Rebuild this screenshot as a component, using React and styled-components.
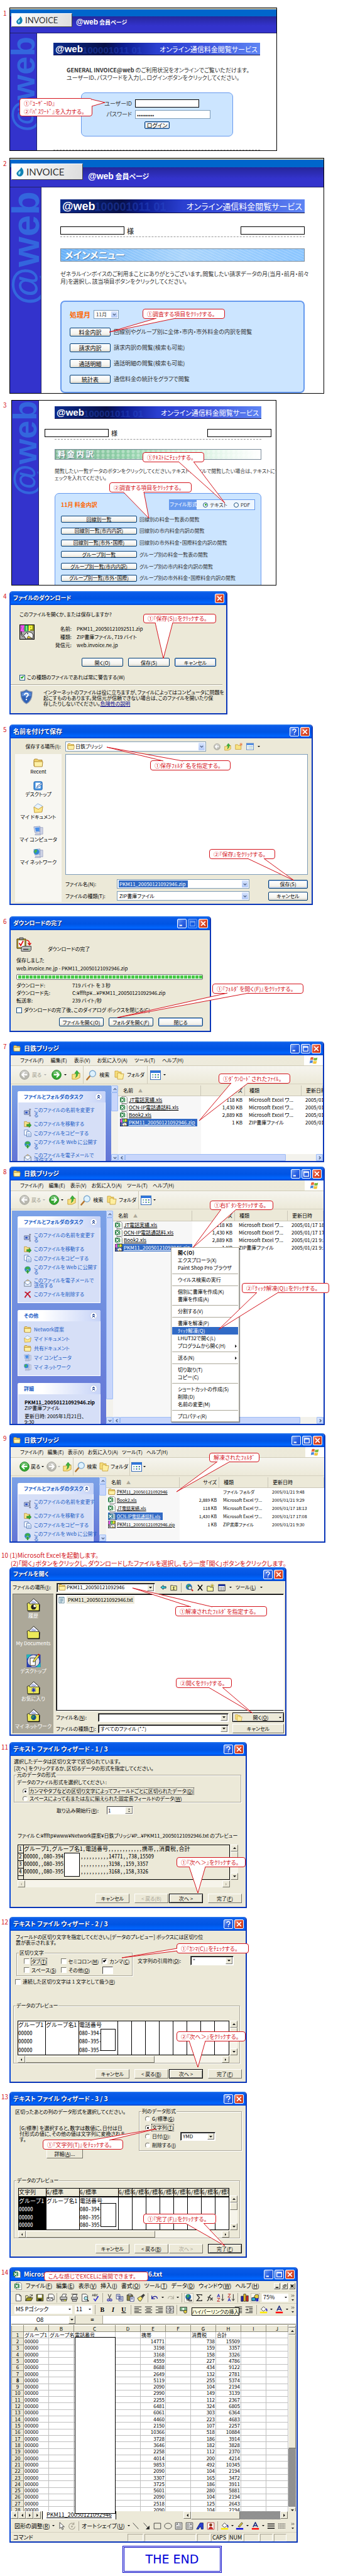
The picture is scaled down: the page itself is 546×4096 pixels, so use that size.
import React, { useId } from "react";
import styled, { createGlobalStyle, css } from "styled-components";

const RED = "#d4141c";
const FACE = "#ece9d8";

const Global = createGlobalStyle`
  *, *::before, *::after { box-sizing: border-box; }
  body {
    margin: 0;
    background: #fff;
    color: #000;
    font: 8px/10px "Noto Sans CJK JP", "Liberation Sans", sans-serif;
    font-feature-settings: "palt";
  }
  button, input, select { font: inherit; font-feature-settings: inherit; color: inherit; margin: 0; }
  p, h1, h2, h3, h4, fieldset { margin: 0; }
  svg { display: block; flex: none; }
`;

/* ---------- page scaffolding ---------- */

const Page = styled.main`
  padding-bottom: 5px;
  overflow: hidden;
`;

const Step = styled.section`
  display: grid;
  grid-template-columns: 15px minmax(0, 1fr);
  margin-top: ${(p) => p.$gap}px;
`;

const StepNo = styled.span`
  color: ${RED};
  font-size: 10px;
  line-height: 10px;
  padding-top: ${(p) => p.$top ?? 3}px;
  padding-left: ${(p) => (p.$wide ? 2 : 5)}px;
  white-space: nowrap;
`;

const Figure = styled.div`
  position: relative;
  width: 100%;
  max-width: ${(p) => p.$w}px;
`;

const Row = styled.div`
  display: flex;
  align-items: ${(p) => p.$align ?? "center"};
  justify-content: ${(p) => p.$justify ?? "flex-start"};
  gap: ${(p) => p.$gap ?? 0}px;
  margin-top: ${(p) => p.$mt ?? 0}px;
  padding-left: ${(p) => p.$pl ?? 0}px;
  padding-right: ${(p) => p.$pr ?? 0}px;
  height: ${(p) => (p.$h ? p.$h + "px" : "auto")};
  white-space: nowrap;
`;

const Spacer = styled.span`
  flex: 1;
`;

/* ---------- red call-outs that lie over the screens ---------- */

const Bubble = styled.div`
  position: absolute;
  left: ${(p) => p.$x}px;
  top: ${(p) => p.$y}px;
  width: ${(p) => p.$w}px;
  height: ${(p) => p.$h}px;
  border: 1px solid ${RED};
  border-radius: 4px;
  background: #fff;
  color: ${RED};
  font-size: 9px;
  line-height: 13px;
  display: flex;
  flex-direction: column;
  justify-content: center;
  padding-left: 6px;
  white-space: nowrap;
`;

const TailLayer = styled.svg`
  position: absolute;
  inset: 0;
  width: 100%;
  height: 100%;
  overflow: visible;
  pointer-events: none;
`;

function Callout({ box: [x, y, w, h], tail, children }) {
  return (
    <>
      <Bubble $x={x} $y={y} $w={w} $h={h}>
        {children}
      </Bubble>
      {tail && (
        <TailLayer aria-hidden="true">
          <polyline points={tail} fill="#fff" stroke={RED} />
        </TailLayer>
      )}
    </>
  );
}

/* ---------- @web member pages ---------- */

const WebFrame = styled.div`
  height: ${(p) => p.$h}px;
  border: 1px solid #000;
  background: #fff;
  overflow: hidden;
  display: flex;
  flex-direction: column;
  margin-left: ${(p) => p.$ml ?? 0}px;
`;

const WebHead = styled.header`
  flex: none;
  height: ${(p) => p.$h}px;
  border-bottom: 1px solid #222266;
  background: linear-gradient(#0066cc 0 ${(p) => p.$band}px, #26269a ${(p) => p.$band}px, #3333cc 70%);
  border-top: 2px solid #c9c7b0;
  display: flex;
  align-items: flex-start;
  gap: ${(p) => p.$gap}px;
  padding: ${(p) => p.$pad}px 0 0 2px;
`;

const Logo = styled.div`
  width: ${(p) => p.$w}px;
  height: ${(p) => p.$h}px;
  border: 1px solid #444;
  border-top-color: #fff;
  border-left-color: #fff;
  background: linear-gradient(100deg, #fff, #ddd);
  display: flex;
  align-items: center;
  gap: 4px;
  padding-left: 7px;
  color: #333;
  font: ${(p) => p.$size}px "Lato", "Noto Sans", sans-serif;
`;

const WebTitle = styled.h2`
  color: #fff;
  font-size: ${(p) => p.$size}px;
  line-height: 16px;
  padding-top: ${(p) => p.$pt}px;
  white-space: nowrap;
  big { font: bold ${(p) => p.$size + 3}px "Liberation Sans", sans-serif; }
`;

const WebBody = styled.div`
  flex: 1;
  min-height: 0;
  display: flex;
`;

const SideBrand = styled.div`
  flex: none;
  width: ${(p) => p.$w}px;
  background: #3333cc;
  border-right: 1px solid #222266;
  overflow: hidden;
  padding-top: ${(p) => p.$pt}px;
  span {
    display: block;
    writing-mode: vertical-rl;
    transform: rotate(180deg);
    color: #3366dd;
    font: bold ${(p) => p.$size}px/${(p) => p.$w}px "Liberation Sans", sans-serif;
  }
`;

const WebMain = styled.div`
  flex: 1;
  min-width: 0;
  padding: ${(p) => p.$pad};
  color: #333;
`;

const BannerBox = styled.div`
  position: relative;
  height: ${(p) => p.$h}px;
  border-bottom: 1px solid #111144;
  background: linear-gradient(95deg, #0b2a8c, #071048 25%, #0c1c90 34%, #2a3fd0 50%, #3a4fdc 70%, #5f86f4);
  display: flex;
  align-items: center;
  justify-content: space-between;
  padding: 0 4px 0 3px;
  color: #fff;
  font-size: ${(p) => p.$size}px;
  white-space: nowrap;
  overflow: hidden;
  b { font: bold ${(p) => p.$brand}px/${(p) => p.$h}px "Liberation Sans", sans-serif; }
`;

const Digits = styled.span`
  position: absolute;
  left: 14%;
  bottom: 0;
  color: #2b4fd0;
  opacity: 0.4;
  font: bold ${(p) => p.$size}px/${(p) => p.$size}px "Liberation Sans", sans-serif;
`;

function Banner({ h, size, brand }) {
  return (
    <BannerBox $h={h} $size={size} $brand={brand}>
      <Digits aria-hidden="true" $size={brand}>100001011 01</Digits>
      <b>@web</b>
      <span>オンライン通信料金閲覧サービス</span>
    </BannerBox>
  );
}

const InvoiceLogo = ({ w, h, size }) => (
  <Logo $w={w} $h={h} $size={size}>
    <svg width={size - 3} height={size} viewBox="0 0 12 16">
      <path d="M8 0C12 4 13 9 10 13C7 17 1 16 0 11C0 7 5 6 8 0Z" fill="#1283b4" />
      <path d="M6 6C3 8 2 10 4 13C6 11 8 9 6 6Z" fill="#9fe3f5" />
    </svg>
    INVOICE
  </Logo>
);

const Blank = styled.div`
  width: ${(p) => p.$w ?? 102}px;
  height: 13px;
  border: 1px solid #000;
  background: #fff;
`;

const NameRow = styled.div`
  display: flex;
  align-items: center;
  justify-content: space-between;
  margin: ${(p) => p.$m};
  strong { display: flex; align-items: center; gap: 4px; font-size: ${(p) => p.$size}px; font-weight: 500; }
`;

const Dashes = styled.hr`
  border: 0;
  border-top: 1px dashed #999;
  margin: ${(p) => p.$mt}px 0 0;
`;

const Intro = styled.p`
  font-size: ${(p) => p.$size ?? 9}px;
  line-height: ${(p) => p.$lh}px;
  margin-top: ${(p) => p.$mt}px;
  padding-left: ${(p) => p.$pl ?? 0}px;
  white-space: nowrap;
  b { font-weight: 700; }
`;

const BluePanel = styled.div`
  border: ${(p) => p.$b ?? 1}px solid #6699ee;
  border-radius: 7px;
  background: #cce5ff;
  height: ${(p) => p.$h}px;
  margin: ${(p) => p.$m};
  padding: ${(p) => p.$p};
  display: flex;
  flex-direction: column;
`;

const Bar = styled.h3`
  height: ${(p) => p.$h}px;
  margin-top: ${(p) => p.$mt}px;
  border: 1px solid #7a8a99;
  background: ${(p) => p.$bg};
  color: #fff;
  font-size: ${(p) => p.$size}px;
  line-height: ${(p) => p.$h - 3}px;
  padding-left: ${(p) => p.$pl}px;
  text-shadow: 1px 1px 1px rgba(40, 80, 120, 0.6);
  white-space: nowrap;
`;

const Orange = styled.strong`
  color: #ff6600;
  font-size: ${(p) => p.$size}px;
`;

/* ---------- buttons and fields ---------- */

const XpButton = styled.button`
  width: ${(p) => p.$w}px;
  height: ${(p) => p.$h ?? 14}px;
  padding: 0;
  flex: none;
  border: 1px solid #003c74;
  border-radius: 2px;
  background: linear-gradient(#fff, #f4f3ee 70%, #dcd7cb);
  ${(p) => p.$focus && css`box-shadow: inset 0 0 0 1px #a9c5f2;`}
  font-size: ${(p) => p.$size ?? 8}px;
  line-height: ${(p) => (p.$h ?? 14) - 3}px;
  white-space: nowrap;
  color: #000;
`;

const OldButton = styled.button`
  width: ${(p) => p.$w ?? 54}px;
  height: ${(p) => p.$h ?? 15}px;
  padding: 0;
  flex: none;
  background: ${FACE};
  border: 1px solid;
  border-color: #fff #77756a #77756a #fff;
  line-height: 11px;
  white-space: nowrap;
  ${(p) => p.$default && css`border-color: #000; box-shadow: inset 1px 1px #fff, inset -1px -1px #888;`}
  &:disabled { color: #a5a294; }
`;

const FieldShell = styled.span`
  display: flex;
  align-items: center;
  width: ${(p) => (p.$w ? p.$w + "px" : "auto")};
  ${(p) => !p.$w && css`flex: 1; min-width: 0;`}
  height: ${(p) => p.$h ?? 15}px;
  background: #fff;
  border: 1px solid #7f9db9;
  ${(p) => p.$old && css`border-color: #555 #fff #fff #555; box-shadow: inset 1px 1px #000;`}
  padding: 1px 1px 1px 2px;
  select, input {
    flex: 1;
    min-width: 0;
    width: 0;
    height: 100%;
    border: 0;
    padding: 0 0 0 1px;
    background: transparent;
    appearance: none;
    outline: none;
  }
`;

const DropMark = styled.span`
  flex: none;
  align-self: stretch;
  width: ${(p) => (p.$old ? 11 : 10)}px;
  display: grid;
  place-items: center;
  ${(p) =>
    p.$old
      ? css`background: ${FACE}; border: 1px solid; border-color: #fff #777 #777 #fff;`
      : css`background: linear-gradient(#d6e3fd, #b3c9f7); border-radius: 1px;`}
`;

const Caret = ({ size = 5, color = "#000", dir = "down" }) => {
  const d = { down: "M0 2h8L4 6z", up: "M0 6h8L4 2z", left: "M6 0v8L2 4z", right: "M2 0v8L6 4z" }[dir];
  return (
    <svg width={size} height={size} viewBox="0 0 8 8">
      <path d={d} fill={color} />
    </svg>
  );
};

const Chevron = ({ dir = "down", color = "#4d6185" }) => {
  const d = { down: "M1 2.5L4 5.5L7 2.5", up: "M1 5.5L4 2.5L7 5.5", left: "M5.5 1L2.5 4L5.5 7", right: "M2.5 1L5.5 4L2.5 7" }[dir];
  return (
    <svg width="6" height="6" viewBox="0 0 8 8">
      <path d={d} fill="none" stroke={color} strokeWidth="1.8" />
    </svg>
  );
};

const Editable = styled.input`
  ${(p) => p.$selected && css`&& { background: linear-gradient(90deg, #316ac5 0 56%, #fff 56%); color: #fff; }`}
`;

function Combo({ label, value, icon, w, h, old, edit, id, selected }) {
  return (
    <FieldShell $w={w} $h={h} $old={old}>
      {icon}
      {edit ? (
        <Editable id={id} aria-label={label} defaultValue={value} $selected={selected} />
      ) : (
        <select id={id} aria-label={label} defaultValue={value}>
          <option>{value}</option>
        </select>
      )}
      <DropMark $old={old}>{old ? <Caret /> : <Chevron />}</DropMark>
    </FieldShell>
  );
}

const Tick = styled.input`
  appearance: none;
  flex: none;
  width: ${(p) => p.$s ?? 9}px;
  height: ${(p) => p.$s ?? 9}px;
  background: #fff;
  border: 1px solid #1c5180;
  border-radius: ${(p) => (p.type === "radio" ? "50%" : "0")};
  ${(p) => p.$old && css`border-color: #77756a #fff #fff #77756a;`}
  display: grid;
  place-items: center;
  &:checked::after {
    content: "";
    ${(p) =>
      p.type === "radio"
        ? css`width: 3px; height: 3px; border-radius: 50%; background: ${p.$old ? "#000" : "#21a121"};`
        : css`
            width: 5px; height: 3px; margin-top: -2px;
            border: solid ${p.$old ? "#000" : "#21a121"};
            border-width: 0 0 2px 2px;
            transform: rotate(-45deg);
          `}
  }
`;

const CheckLabel = styled.label`
  display: flex;
  align-items: center;
  gap: ${(p) => p.$gap ?? 3}px;
  width: ${(p) => (p.$w ? p.$w + "px" : "auto")};
  height: ${(p) => (p.$h ? p.$h + "px" : "auto")};
  white-space: nowrap;
`;

const Dotted = styled.span`
  outline: 1px dotted #333;
`;

/* ---------- windows ---------- */

const Win = styled.div`
  height: ${(p) => p.$h}px;
  border: 2px solid #0848d8;
  border-top: 0;
  border-bottom-color: #0a36b8;
  border-right-color: #0a36b8;
  border-radius: 5px 5px 0 0;
  background: ${FACE};
  display: flex;
  flex-direction: column;
  overflow: hidden;
`;

const TitleBar = styled.div`
  flex: none;
  height: 22px;
  margin: 0 -2px;
  padding: 0 5px 0 6px;
  background: linear-gradient(#2a7bee, #0a5be8 12%, #0054e3 55%, #0066ff 85%, #0040c8);
  display: flex;
  align-items: center;
  gap: 2px;
  color: #fff;
  h3 { flex: 1; font-size: ${(p) => p.$size}px; line-height: 14px; text-shadow: 1px 1px #0a2a80; white-space: nowrap; padding-left: ${(p) => (p.$icon ? 3 : 0)}px; }
`;

const CapButton = styled.button`
  width: 15px;
  height: 15px;
  padding: 0;
  border: 1px solid #fff;
  border-radius: 2px;
  background: ${(p) => (p.$red ? "linear-gradient(135deg,#f0967c,#e0492a 45%,#c23a1a)" : "linear-gradient(135deg,#7ba4f5,#2a62e4 50%,#1d4fd0)")};
  opacity: ${(p) => (p.disabled ? 0.45 : 1)};
  display: grid;
  place-items: center;
`;

const CAPS = {
  min: ["最小化", <path key="p" d="M2 10h5" stroke="#fff" strokeWidth="2.4" />],
  max: ["最大化", <path key="p" d="M2 2.5h9v8.5H2zM2 3.6h9" stroke="#fff" strokeWidth="1.5" fill="none" />],
  help: ["ヘルプ", <path key="p" d="M3.5 4.5C3.5 0.5 9.8 0.8 9.5 4.4C9.3 6.2 6.5 6.5 6.5 8.8M6.5 10.3v1.8" stroke="#fff" strokeWidth="1.8" fill="none" />],
  close: ["閉じる", <path key="p" d="M2.5 2.5L10.5 10.5M10.5 2.5L2.5 10.5" stroke="#fff" strokeWidth="2" />],
};

function Window({ title, icon, caps, h, size = 10, off = [], children }) {
  return (
    <Win $h={h}>
      <TitleBar $icon={!!icon} $size={size}>
        {icon}
        <h3>{title}</h3>
        {caps.map((c) => (
          <CapButton key={c} $red={c === "close"} disabled={off.includes(c)} aria-label={CAPS[c][0]}>
            <svg width="11" height="11" viewBox="0 0 13 13">{CAPS[c][1]}</svg>
          </CapButton>
        ))}
      </TitleBar>
      {children}
    </Win>
  );
}

const Body = styled.div`
  flex: 1;
  min-height: 0;
  padding: ${(p) => p.$p};
`;

/* ---------- icons ---------- */

const FolderIcon = ({ size = 11 }) => (
  <svg width={size} height={size} viewBox="0 0 16 16">
    <path d="M1 3.5L2 2h4.5L8 3.5h6V13H1z" fill="#f3d46c" stroke="#a9822a" />
    <path d="M1 6h14l-.8 8H1.8z" fill="#fdf0a6" stroke="#b58e35" />
  </svg>
);

const OpenFolder = ({ size = 17 }) => (
  <svg width={size} height={size} viewBox="0 0 16 16">
    <path d="M1 2h5l1 1.5h4V12H1z" fill="#f7df7d" stroke="#c59a2e" strokeWidth=".8" />
    <path d="M5 5h4l1 1.5h5L13.5 15H5z" fill="#fdeea0" stroke="#c59a2e" strokeWidth=".8" />
  </svg>
);

const UpFolder = ({ size = 14 }) => (
  <svg width={size} height={size + 2} viewBox="0 0 16 18">
    <path d="M1 8h5l1.5-2H15v8L9 17H1z" fill="#f8e283" stroke="#c59a2e" />
    <path d="M7 14C11 12 11.5 9 11 6.5H13.8L9.5 1L5.5 6.5H8C8.5 9 8.5 12 7 14Z" fill="#3cb53c" stroke="#1c7a1c" strokeWidth=".6" />
  </svg>
);

const NewFolder = ({ size = 12 }) => (
  <svg width={size} height={size} viewBox="0 0 16 16">
    <path d="M1 4h5l1.5 2H13v8H1z" fill="#f8e283" stroke="#c59a2e" />
    <path d="M13 0v7M9.5 3.5h7M10.5 1l5 5M15.5 1l-5 5" stroke="#e8743a" />
  </svg>
);

const Circle = ({ on, left, size = 17 }) => (
  <svg width={size} height={size} viewBox="0 0 18 18">
    <circle cx="9" cy="9" r="8.3" fill={on ? "#34a832" : "#b9b8b0"} stroke={on ? "#1f7d22" : "#a3a299"} />
    <ellipse cx="9" cy="5.5" rx="6" ry="4" fill="#fff" opacity=".3" />
    <path d={left ? "M14 9H5M9 4.5L4.5 9L9 13.5" : "M4 9h9M9 4.5L13.5 9L9 13.5"} stroke="#fff" strokeWidth="2.2" fill="none" />
  </svg>
);

const SearchIcon = () => (
  <svg width="17" height="17" viewBox="0 0 18 18">
    <path d="M1.5 16.5L6.5 10.5" stroke="#b5742c" strokeWidth="2.6" strokeLinecap="round" />
    <circle cx="11" cy="6.5" r="5.2" fill="#dff2fd" stroke="#7aa7cf" strokeWidth="1.4" />
  </svg>
);

const ViewIcon = ({ size = 17 }) => (
  <svg width={size} height={size} viewBox="0 0 18 18">
    <rect x=".5" y="1.5" width="17" height="15" fill="#fff" stroke="#2a63b5" />
    <path d="M1 3.5h16" stroke="#2e76dc" strokeWidth="3.5" />
    <path d="M3.5 8.5h2M3.5 12.5h2" stroke="#7aa" strokeWidth="2" />
    <path d="M8 8.5h2M12.5 12.5h2" stroke="#2f9a48" strokeWidth="2" />
    <path d="M12.5 8.5h2M8 12.5h2" stroke="#3350b0" strokeWidth="2" />
  </svg>
);

const WinLogo = () => (
  <svg width="15" height="15" viewBox="0 0 18 18">
    <path d="M3 3C5 1.5 7 2 8.5 3L7.5 8C6 7 4 7 2 8z" fill="#e8663c" />
    <path d="M9.5 3.3C12 4.5 14 4 16 3L15 8C13 9 10.5 9 8.5 8z" fill="#7ab83e" />
    <path d="M1.8 9C4 8 6 8 7.3 9L6.3 14C5 13 3 13 1 14z" fill="#4a86dc" />
    <path d="M8.3 9.3C10.5 10.3 13 10.3 14.8 9.3L13.8 14.3C12 15.3 9.5 15.3 7.3 14.3z" fill="#f2c53c" />
  </svg>
);

const XlsIcon = ({ dim }) => (
  <svg width="12" height="12" viewBox="0 0 16 16">
    <path d="M4 .5h8l3.5 3.5v11.5H4z" fill={dim ? "#a9bfe0" : "#fff"} stroke="#666" />
    <path d="M9 6h5M9 8.5h5M9 11h5" stroke="#9ac79a" />
    <rect x="0" y="3" width="10" height="9.5" fill={dim ? "#2a7590" : "#1f7a3d"} />
    <path d="M2 5l6 6M8 5l-6 6" stroke="#fff" strokeWidth="1.7" />
  </svg>
);

const ZipIcon = ({ size = 12, dim }) => (
  <svg width={size} height={size} viewBox="0 0 24 24">
    <rect x=".5" y=".5" width="23" height="23" fill={dim ? "#4a63c0" : "#a9a9a9"} stroke="#000" />
    <rect x="1" y="1" width="7" height="11" fill="#b45ab4" />
    <path d="M2.5 2.5h4L3 9.5h4" stroke="#ff4fff" strokeWidth="2" fill="none" />
    <path d="M8 1h6l-1 10H8z" fill="#17a84a" />
    <path d="M11 2v8" stroke="#8ff07a" strokeWidth="2" />
    <path d="M14 1h9v9h-9z" fill="#8d8f20" />
    <path d="M16 10V2.5h3.5v4H16" stroke="#ffff3a" strokeWidth="2" fill="none" />
    <path d="M3 11C3 18 7 19 9 15C12 10 20 11 22 17L21 23H10L8 19C4 20 1 16 3 11Z" fill="#f2f2f2" stroke="#222" />
    <path d="M14 18L20 22H12z" fill="#f0d23a" stroke="#222" strokeWidth=".7" />
    <circle cx="13" cy="14.5" r=".9" fill="#000" />
  </svg>
);

const Shield = () => (
  <svg width="20" height="24" viewBox="0 0 20 24">
    <path d="M10 .8C13 3 16 3.8 19 4C19.5 13 17 19.5 10 23C3 19.5 .5 13 1 4C4 3.8 7 3 10 .8Z" fill="#2f62b8" stroke="#8f9bb0" strokeWidth="1.3" />
    <path d="M10 3C12 4.5 14.5 5.3 17 5.5V11H3V5.5C5.5 5.3 8 4.5 10 3Z" fill="#6fa0e6" opacity=".7" />
    <path d="M7 9C7 5.5 13 5.8 12.8 9C12.6 11 10 11 10 13.3M10 15.2v2" stroke="#fff" strokeWidth="2" fill="none" />
  </svg>
);

const DownloadDone = () => (
  <svg width="24" height="24" viewBox="0 0 24 24">
    <path d="M1 3h14v15H1z" fill="#c9a92c" stroke="#3a3000" />
    <path d="M3 5h10v11H3z" fill="#fff" stroke="#777" strokeWidth=".5" />
    <path d="M5 1h6v3H5z" fill="#999" stroke="#222" strokeWidth=".7" />
    <path d="M4.5 9.5L7 13.5L11 6" stroke="#e01010" strokeWidth="1.7" fill="none" />
    <path d="M16 5C20 5 21 8 21 11M18.5 9.5L21 12.5L23.5 9.5" stroke="#e01010" strokeWidth="1.5" fill="none" />
    <path d="M8 17l2-2.5h13.5V20L22 22.5H8z" fill="#bdbdbd" stroke="#222" strokeWidth=".8" />
    <path d="M11 19.5h8" stroke="#333" strokeWidth="1.4" />
    <path d="M19.5 19.5h1.5" stroke="#3c3" strokeWidth="1.4" />
  </svg>
);

const Monitor = ({ size = 16, globe }) => (
  <svg width={size} height={size} viewBox="0 0 18 18">
    <path d="M12 3h5v12h-5z" fill="#cfd4e6" stroke="#8790b5" strokeWidth=".7" />
    <path d="M1 2l11-1v10L3 12z" fill="#dfe4ef" stroke="#6c7db5" strokeWidth=".8" />
    <path d="M3 3.5l8-.7v7L4.5 10.5z" fill={globe ? "#79b4ea" : "#4a8fe8"} />
    <path d="M4 14h8l1 2.5H3z" fill="#c9cede" stroke="#8790b5" strokeWidth=".7" />
    {globe && <circle cx="5.5" cy="6" r="5" fill="#2f86d8" />}
    {globe && <path d="M2 4C4 1 7 2 7 4C7 6 4 6 5 9C3 9 1 7 2 4Z" fill="#48b54a" />}
  </svg>
);

const DocsFolder = ({ size = 16 }) => (
  <svg width={size} height={size} viewBox="0 0 18 18">
    <path d="M2 6l6-5 8 4v9H2z" fill="#e9f3fc" stroke="#85a8cd" />
    <path d="M1 7l8 4 8-5-1.5 10L2 17z" fill="#fbe68c" stroke="#c59a2e" />
  </svg>
);

const DeskIcon = ({ size = 16 }) => (
  <svg width={size} height={size} viewBox="0 0 18 18">
    <rect x="1" y="2" width="15" height="15" rx="2" fill="#3f8fdc" stroke="#2a68b5" />
    <path d="M4 4h9v10H4z" fill="#fff" />
    <path d="M6 13l2-4 7-4 1.5 1.5L10 11z" fill="#e8f2fb" stroke="#2a5aa5" />
  </svg>
);

const TaskIcon = ({ kind }) => {
  const art = {
    rename: <><path d="M1 4h10v8H1z" fill="#cfd8ee" stroke="#33447a" /><path d="M3 6h5v4H3z" fill="#2a4fc0" /><path d="M13 1v14M11 1h4M11 15h4" stroke="#445" /></>,
    move: <><path d="M1 3h5l1 2h6v9H1z" fill="#f8e28a" stroke="#b58e35" /><path d="M6 9h5V6l5 5-5 5v-3H6z" fill="#34a832" stroke="#1c6a1c" strokeWidth=".6" /></>,
    copy: <><path d="M1 1h8v11H1z" fill="#fff" stroke="#4a6fb0" /><path d="M6 4h6l3 3v8H6z" fill="#eef6ff" stroke="#3a62a8" /><path d="M8 9h5M8 11h5M8 13h5" stroke="#7a9fd8" /></>,
    web: <><circle cx="8" cy="7" r="6.5" fill="#2f86c8" /><path d="M2 5C5 0 12 0 13 5C11 8 5 8 2 5Z" fill="#3fae48" /><path d="M8 7l5 6h-3v3H6v-3H3z" fill="#2f9a3a" stroke="#e8f5e8" strokeWidth=".7" /></>,
    mail: <><path d="M1 6l7-5 7 5v9H1z" fill="#f5d9a0" stroke="#8a6d3a" /><path d="M3 4h10v7H3z" fill="#fff" stroke="#7a9fd8" /><path d="M1 7l7 5 7-5v8H1z" fill="#dfe9f8" stroke="#6c86b0" /></>,
    del: <path d="M2 3C6 5 11 10 14 15M14 2C9 5 5 10 2 15" stroke="#c2182c" strokeWidth="2.6" fill="none" />,
  }[kind];
  return <svg width="12" height="12" viewBox="0 0 16 16">{art}</svg>;
};

/* ---------- explorer window ---------- */

const MenuBar = styled.div`
  flex: none;
  display: flex;
  align-items: stretch;
  height: 17px;
  gap: ${(p) => p.$gap}px;
  padding-left: 15px;
  font-size: 8px;
  line-height: 16px;
  border-bottom: 1px solid #d0ccb8;
  background: linear-gradient(90deg, #f0eee4, ${FACE});
  white-space: nowrap;
  em {
    margin-left: auto;
    width: 30px;
    background: #fff;
    display: grid;
    place-items: center;
  }
`;

const ToolBar = styled.div`
  flex: none;
  display: flex;
  align-items: center;
  height: 29px;
  gap: ${(p) => p.$gap}px;
  padding-left: 14px;
  border-bottom: 1px solid #d5d1bf;
  background: linear-gradient(#f6f5ef, ${FACE});
  font-size: 8px;
  white-space: nowrap;
`;

const Divider = styled.i`
  width: 1px;
  align-self: stretch;
  background: #cfcbb8;
`;

const Dim = styled.span`
  color: ${(p) => (p.$dim ? "#9c9a8c" : "#000")};
`;

const Content = styled.div`
  flex: 1;
  min-height: 0;
  display: grid;
  grid-template-columns: ${(p) => p.$pane}px 11px minmax(0, 1fr);
  padding: 2px 0 0 2px;
`;

const Pane = styled.div`
  overflow: hidden;
  padding: 9px 9px 0 9px;
  background: linear-gradient(#7ba2e7, #6375d6);
  display: flex;
  flex-direction: column;
  gap: 11px;
`;

const TaskPanel = styled.div`
  flex: none;
  background: #d6dff7;
  border: 1px solid #fff;
  border-top: 0;
  border-radius: 3px 3px 0 0;
  h4 {
    margin: 0 -1px;
    height: 18px;
    border-radius: 3px 3px 0 0;
    background: linear-gradient(90deg, #fff 30%, #c6d3f7);
    color: #215dc6;
    font-size: 8px;
    display: flex;
    align-items: center;
    justify-content: space-between;
    padding: 0 5px 0 10px;
    white-space: nowrap;
  }
`;

const TaskList = styled.div`
  display: flex;
  flex-direction: column;
  gap: 5px;
  padding: 8px 0 8px 9px;
`;

const TaskLink = styled.a`
  display: grid;
  grid-template-columns: 12px 1fr;
  gap: 4px;
  align-items: start;
  min-height: 10px;
  line-height: 8px;
  color: #215dc6;
  text-decoration: none;
  white-space: nowrap;
  padding-top: ${(p) => (p.$two ? 0 : 1)}px;
  svg { margin: ${(p) => (p.$two ? "2px 0 -4px" : "-2px 0 -2px")}; }
`;

const Details = styled.div`
  padding: 8px 0 0 10px;
  line-height: 9px;
  white-space: nowrap;
  overflow: hidden;
  p + p { margin-top: 4px; }
`;

const Fold = () => (
  <svg width="12" height="12" viewBox="0 0 14 14">
    <circle cx="7" cy="7" r="6.3" fill="#fff" stroke="#b9c5e6" />
    <path d="M4.5 6.5L7 4L9.5 6.5M4.5 10L7 7.5L9.5 10" fill="none" stroke="#1c3f8f" strokeWidth="1.3" />
  </svg>
);

const VScroll = styled.div`
  display: flex;
  flex-direction: column;
  background: #f3f2ec;
  overflow: hidden;
`;

const HScroll = styled.div`
  display: flex;
  height: 11px;
  background: #f3f2ec;
`;

const ScrollCap = styled.button`
  flex: none;
  width: 11px;
  height: 11px;
  padding: 0;
  border: 1px solid #9ebdf5;
  border-radius: 1px;
  background: linear-gradient(135deg, #dbe6fe, #bacff9);
  display: grid;
  place-items: center;
`;

const Thumb = styled.i`
  border: 1px solid #9ebdf5;
  border-radius: 1px;
  background: #c8d6fb;
  ${(p) => (p.$v ? css`height: ${p.$len};` : css`width: ${p.$len};`)}
`;

const List = styled.div`
  min-width: 0;
  display: flex;
  flex-direction: column;
  overflow: hidden;
`;

const Files = styled.table`
  border-collapse: collapse;
  table-layout: fixed;
  width: 100%;
  font-size: 8px;
  white-space: nowrap;
  th {
    height: 16px;
    padding: 0 0 0 7px;
    text-align: left;
    font-weight: 400;
    background: ${FACE};
    border-bottom: 1px solid #cbc7b8;
    box-shadow: inset -1px 0 #cbc7b8;
    overflow: hidden;
  }
  td { height: ${(p) => p.$row}px; padding: 0 0 0 6px; overflow: hidden; font-size: ${(p) => p.$size}px; line-height: 10px; }
  th:first-child { padding-left: 8px; }
  td:first-child { padding-left: 3px; }
  th:nth-child(2), td:nth-child(2) { text-align: right; padding-right: 4px; padding-left: 0; }
`;

const FilesArea = styled.div`
  flex: 1;
  min-height: 0;
  overflow: hidden;
  background: linear-gradient(90deg, #f7f7f7 0 ${(p) => p.$name}px, #fff 0);
`;

const FileName = styled.span`
  display: inline-flex;
  align-items: center;
  gap: 2px;
  vertical-align: top;
  padding-right: 4px;
  text-decoration: underline;
  ${(p) => p.$sel && css`background: #316ac5; color: #fff;`}
`;

const Grey = styled.span`
  color: #aca899;
  font-size: 7px;
`;

const RENAME = [
  ["rename", "このファイルの名前を変更す", "る"],
  ["move", "このファイルを移動する"],
  ["copy", "このファイルをコピーする"],
  ["web", "このファイルを Web に公開す", "る"],
  ["mail", "このファイルを電子メールで", "送信する"],
  ["del", "このファイルを削除する"],
];

const PLACES = [
  [<FolderIcon size={12} />, "Network提案"],
  [<DocsFolder size={12} />, "マイ ドキュメント"],
  [<FolderIcon size={12} />, "共有ドキュメント"],
  [<Monitor size={12} />, "マイ コンピュータ"],
  [<Monitor size={12} globe />, "マイ ネットワーク"],
];

const ICONS = { xls: XlsIcon, zip: ZipIcon, dir: () => <FolderIcon size={12} /> };

function Explorer({ h, pane, cols, row, size = 8, files, gap, tgap, back, full, hscroll, thumb }) {
  return (
    <Window title="日鉄ブリッジ" icon={<FolderIcon size={12} />} caps={["min", "max", "close"]} h={h}>
      <MenuBar $gap={gap}>
        <span>ファイル(F)</span><span>編集(E)</span><span>表示(V)</span>
        <span>お気に入り(A)</span><span>ツール(T)</span><span>ヘルプ(H)</span>
        <em><WinLogo /></em>
      </MenuBar>
      <ToolBar $gap={tgap}>
        <Circle left on={back} size={16} />
        <Dim $dim={!back}>戻る</Dim>
        <Caret size={4} color={back ? "#000" : "#aaa"} />
        <span />
        <Circle on={!back} size={16} />
        <Caret size={4} color={back ? "#aaa" : "#000"} />
        <span />
        <UpFolder />
        <Divider />
        <SearchIcon />
        <span>検索</span>
        <span />
        <OpenFolder size={16} />
        <span>フォルダ</span>
        <Divider />
        <ViewIcon />
        <Caret size={4} />
      </ToolBar>
      <Content $pane={pane}>
        <Pane>
          <TaskPanel>
            <h4>ファイルとフォルダのタスク<Fold /></h4>
            <TaskList>
              {RENAME.map(([k, a, b]) => (
                <TaskLink href="#" key={k} $two={!!b}>
                  <TaskIcon kind={k} />
                  <span>{a}{b && <><br />{b}</>}</span>
                </TaskLink>
              ))}
            </TaskList>
          </TaskPanel>
          {full && (
            <TaskPanel>
              <h4>その他<Fold /></h4>
              <TaskList>
                {PLACES.map(([icon, t]) => (
                  <TaskLink href="#" key={t}>{icon}<span>{t}</span></TaskLink>
                ))}
              </TaskList>
            </TaskPanel>
          )}
          {full && (
            <TaskPanel>
              <h4>詳細<Fold /></h4>
              <Details>
                <p><b>PKM11_20050121092946.zip</b><br />ZIP書庫ファイル</p>
                <p>更新日時: 2005年1月21日、<br />9:30</p>
              </Details>
            </TaskPanel>
          )}
        </Pane>
        <VScroll>
          <ScrollCap aria-label="上へ"><Chevron dir="up" /></ScrollCap>
          <Thumb $v $len={thumb} />
          <Spacer />
          <ScrollCap aria-label="下へ"><Chevron /></ScrollCap>
        </VScroll>
        <List>
          <FilesArea $name={cols[0]}>
            <Files $row={row} $size={size}>
              <colgroup>
                <col width={cols[0]} /><col width={cols[1]} /><col width={cols[2]} /><col />
              </colgroup>
              <thead>
                <tr><th>名前　<Grey>▲</Grey></th><th>サイズ</th><th>種類</th><th>更新日時</th></tr>
              </thead>
              <tbody>
                {files.map(([k, n, s, t, d, sel]) => {
                  const Icon = ICONS[k];
                  return (
                    <tr key={n}>
                      <td><FileName $sel={sel}><Icon dim={sel} />{n}</FileName></td>
                      <td>{s}</td><td>{t}</td><td>{d}</td>
                    </tr>
                  );
                })}
              </tbody>
            </Files>
          </FilesArea>
          {hscroll && (
            <HScroll>
              <ScrollCap aria-label="左へ"><Chevron dir="left" /></ScrollCap>
              <Thumb $len={hscroll} />
              <Spacer />
              <ScrollCap aria-label="右へ"><Chevron dir="right" /></ScrollCap>
            </HScroll>
          )}
        </List>
      </Content>
    </Window>
  );
}

const ContextMenu = styled.div`
  position: absolute;
  left: ${(p) => p.$x}px;
  top: ${(p) => p.$y}px;
  width: 109px;
  padding: 2px 1px;
  background: #fff;
  border: 1px solid #aca899;
  box-shadow: 1px 1px 1px rgba(0, 0, 0, 0.4);
  line-height: 12px;
  white-space: nowrap;
  hr { border: 0; border-top: 1px solid #aca899; margin: 3px 0; height: 0; }
`;

const MenuItem = styled.div`
  height: 12px;
  padding: 0 1px 0 9px;
  display: flex;
  justify-content: space-between;
  align-items: center;
  font-weight: ${(p) => (p.$bold ? 700 : 400)};
  ${(p) => p.$hot && css`background: #316ac5; color: #fff;`}
`;

const CONTEXT = [
  ["開く(O)", "bold"], "エクスプローラ(X)", "Paint Shop Pro ブラウザ", null, "ウイルス検索の実行", null,
  "個別に書庫を作成(K)", "書庫を作成(A)", null, "分割する(V)", null, "書庫を解凍(P)", ["ｸｨｯｸ解凍(Q)", "hot"],
  "LHUT32で開く(L)", ["プログラムから開く(H)", "sub"], null, ["送る(N)", "sub"], null, "切り取り(T)", "コピー(C)", null,
  "ショートカットの作成(S)", "削除(D)", "名前の変更(M)", null, "プロパティ(R)",
];

/* ---------- pieces of the dialogs ---------- */

const InfoGrid = styled.dl`
  display: grid;
  grid-template-columns: 24px 59px 1fr;
  column-gap: 0;
  grid-auto-rows: 13px;
  line-height: 13px;
  margin: 11px 0 0;
  svg { grid-row: 1 / 3; }
  dt { grid-column: 2; text-align: right; }
  dd { grid-column: 3; margin: 0 0 0 8px; }
`;

const Rule = styled.hr`
  margin: 6px -10px 0 -14px;
  border: 0;
  border-top: 1px solid #aca899;
  border-bottom: 1px solid #fff;
`;

const Notice = styled.p`
  line-height: 9px;
  white-space: nowrap;
  a { color: #00008b; }
`;

const SavePlaces = styled.div`
  width: 74px;
  flex: none;
  background: #f8f7f2;
  padding-top: 6px;
  display: flex;
  flex-direction: column;
  align-items: center;
`;

const SavePlace = styled.div`
  height: 36px;
  display: flex;
  flex-direction: column;
  align-items: center;
  gap: 1px;
  white-space: nowrap;
`;

const FileArea = styled.div`
  flex: 1;
  background: #fff;
  border: 1px solid ${(p) => (p.$old ? "#444" : "#7f9db9")};
  ${(p) => p.$old && css`border-right-color: #fff; border-bottom-color: #fff; box-shadow: inset 0 -1px #000, inset 1px 1px #000; padding: 3px;`}
`;

const Column = styled.div`
  flex: 1;
  min-width: 0;
  display: flex;
  flex-direction: column;
`;

const FieldName = styled.label`
  flex: none;
  width: ${(p) => p.$w}px;
  text-align: ${(p) => p.$align ?? "left"};
  white-space: nowrap;
`;

const Progress = styled.div`
  height: 9px;
  margin-top: 4px;
  border: 1px solid #777;
  border-radius: 2px;
  background: #fff;
  padding: 1px 0 1px 2px;
  &::before {
    content: "";
    display: block;
    height: 5px;
    background: repeating-linear-gradient(90deg, #45c945 0 5px, #fff 5px 6px);
  }
`;

const Facts = styled.dl`
  display: grid;
  grid-template-columns: 89px 1fr;
  line-height: 12px;
  margin: 3px 0 0;
  dd { margin: 0; }
`;

const OldPlaces = styled.div`
  width: 65px;
  flex: none;
  background: #aca899;
  color: #fff;
  border-left: 1px solid #77756a;
  border-top: 1px solid #77756a;
  padding-top: 6px;
`;

const OldPlace = styled.div`
  height: 44px;
  display: flex;
  flex-direction: column;
  align-items: center;
  gap: 1px;
  white-space: nowrap;
`;

const FilePile = ({ mark }) => (
  <svg width="23" height="22" viewBox="0 0 24 24">
    <path d="M4 9L12 1l9 8v4H4z" fill="#fff" stroke="#111" />
    <path d="M8 8l4-3M10 9l4-3M13 9l3-2" stroke="#3a4fc0" />
    <path d="M1.5 22L.8 9.5L3.5 8L5 10h15l2.5 1-1 11z" fill="#ece95a" stroke="#222" />
    <path d="M2 22.5h20v-11" stroke="#111" strokeWidth="1.5" fill="none" />
    {mark === "clock" && <><circle cx="12" cy="15.5" r="4.5" fill="#222" /><path d="M12 15.5V11.5A4 4 0 0 1 16 15.5z" fill="#fff" /></>}
    {mark === "star" && <path d="M12 11.5v8M8 15.5h8M9 12.5l6 6M15 12.5l-6 6" stroke="#2030c0" strokeWidth="1.2" />}
    {mark === "net" && <><circle cx="12" cy="15" r="4.5" fill="#15558c" /><path d="M9 14c2-3 5-2 4 0s-3 2-3 4" fill="#3a9a4a" /></>}
  </svg>
);

const OldDesk = () => (
  <svg width="23" height="22" viewBox="0 0 24 24">
    <rect x="0" y="2" width="24" height="22" fill="#2a3fae" />
    <path d="M0 2h8L0 10zM24 24h-8l8-8z" fill="#1fb8b8" />
    <circle cx="12" cy="13" r="10" fill="#e4e4e4" />
    <path d="M6 8h9v13H6z" fill="#fff" stroke="#222" />
    <path d="M11 13L19 2l3 2-8 10-3 1z" fill="#f2e84a" stroke="#222" strokeWidth=".8" />
    <path d="M19 2l1.5-1.5 3 2L22 4z" fill="#c21" />
  </svg>
);

const TextFile = styled.span`
  display: inline-flex;
  align-items: center;
  gap: 3px;
  span { background: ${FACE}; padding: 0 2px; line-height: 12px; }
`;

const Group = styled.fieldset`
  border: 1px solid #aca899;
  box-shadow: inset 1px 1px #fff, 1px 1px #fff;
  min-width: 0;
  height: ${(p) => p.$h}px;
  width: ${(p) => (p.$w ? p.$w + "px" : "auto")};
  margin-top: ${(p) => p.$mt ?? 0}px;
  padding: ${(p) => p.$p ?? "0 4px"};
  position: relative;
`;

const Legend = styled.legend`
  position: absolute;
  top: -6px;
  left: 3px;
  padding: 0 1px;
  background: ${FACE};
  line-height: 10px;
  white-space: nowrap;
`;

const Preview = styled.div`
  display: grid;
  grid-template-columns: minmax(0, 1fr) 12px;
  column-gap: 1px;
  row-gap: 1px;
  margin-top: ${(p) => p.$mt}px;
`;

const OldCap = styled(OldButton)`
  width: 12px;
  height: ${(p) => p.$h ?? 11}px;
  display: grid;
  place-items: center;
`;

const OldTrack = styled.div`
  display: flex;
  flex-direction: ${(p) => (p.$v ? "column" : "row")};
  background: #f6f4ea;
`;

const OldThumb = styled.i`
  background: ${FACE};
  border: 1px solid;
  border-color: #fff #77756a #77756a #fff;
  ${(p) => (p.$v ? css`height: ${p.$len};` : css`width: ${p.$len};`)}
`;

const mono = css`
  font-size: 9px;
  font-feature-settings: "hwid";
  line-height: 12px;
  white-space: nowrap;
`;

const RawText = styled.ol`
  ${mono}
  list-style: none;
  margin: 0;
  padding: 0;
  height: 56px;
  border: 1px solid #000;
  overflow: hidden;
  li { display: grid; grid-template-columns: 9px 1fr; height: 12px; }
  i { font-style: normal; border-right: 1px solid #000; border-bottom: 1px solid #000; padding-left: 1px; }
`;

const Cols = styled.table`
  ${mono}
  border-collapse: collapse;
  table-layout: fixed;
  width: 100%;
  height: ${(p) => p.$h}px;
  background: #fff;
  border: 1px solid #000;
  th, td { padding: 0; height: 12px; text-align: left; font-weight: 400; border-left: 1px solid #000; border-right: 1px solid #000; overflow: hidden; vertical-align: top; }
  th { background: ${FACE}; border-bottom: 2px solid #000; }
  ${(p) => p.$pick && css`td:first-child { background: #000; color: #fff; }`}
`;

const Cover = styled.div`
  position: absolute;
  left: ${(p) => p.$x}px;
  top: ${(p) => p.$y}px;
  width: ${(p) => p.$w}px;
  height: ${(p) => p.$h}px;
  background: #fff;
  border: 1px solid #000;
`;

const DATA = [
  ["グループ1", "グループ名1", "電話番号"],
  ["00000", "", "080-394-"],
  ["00000", "", "080-395-"],
  ["00000", "", "080-395-"],
];

function ColumnPreview({ head, h, pick }) {
  const widths = [44, 53, 62, 22, 22, 22, 22, 22, 22, 22];
  const rest = Array.from({ length: 8 }, (_, i) => i);
  return (
    <Cols $h={h} $pick={pick}>
      <colgroup>{widths.map((w, i) => <col key={i} width={w} />)}<col /></colgroup>
      {head && (
        <thead><tr><th>文字列</th><th>G/標準</th><th>G/標準</th>{rest.map((i) => <th key={i}>G/標準</th>)}</tr></thead>
      )}
      <tbody>
        {DATA.map((r, n) => (
          <tr key={n}>{r.map((c, i) => <td key={i}>{c}</td>)}{rest.map((i) => <td key={i} />)}</tr>
        ))}
      </tbody>
    </Cols>
  );
}

const Gap12 = styled.i`
  flex: none;
  height: 12px;
  background: ${FACE};
`;

function Scrolls({ children, off, top, mt }) {
  const tone = off ? "#aca899" : "#000";
  return (
    <Preview $mt={mt}>
      {children}
      <OldTrack $v>
        {top && <Gap12 />}
        <OldCap aria-label="上へ"><Caret size={5} dir="up" /></OldCap>
        <OldThumb $v $len="12px" />
        <Spacer />
        <OldCap aria-label="下へ"><Caret size={5} /></OldCap>
      </OldTrack>
      <OldTrack>
        <OldCap aria-label="左へ"><Caret size={4} dir="left" color={tone} /></OldCap>
        {!off && <OldThumb $len="206px" />}
        <Spacer />
        <OldCap aria-label="右へ"><Caret size={4} dir="right" color={tone} /></OldCap>
      </OldTrack>
    </Preview>
  );
}

const WizardFoot = ({ first, last, mt }) => (
  <Row $mt={mt} $justify="flex-end" $pr={6} $gap={8}>
    <OldButton>キャンセル</OldButton>
    <Row $gap={1}>
      <OldButton disabled={first}>&lt; 戻る({first ? "B" : <u>B</u>})</OldButton>
      <OldButton $default={!last} disabled={last}>次へ &gt;</OldButton>
    </Row>
    <OldButton $default={last}>完了(<u>F</u>)</OldButton>
  </Row>
);

/* ---------- spreadsheet ---------- */

const G = ({ children }) => (
  <svg width="13" height="13" viewBox="0 0 16 16">{children}</svg>
);

const A = "#2a2a2a";
const art = {
  new: <path d="M3 1.5h7l3 3v10H3zM10 1.5v3h3" fill="#fff" stroke={A} />,
  open: <><path d="M1 4h4l1 2h5v2H4l-3 6z" fill="#fff9a0" stroke={A} /><path d="M4 8h11l-3 6H1z" fill="#9a9418" stroke={A} /><path d="M9 3c2-2 4-1 5 1M14 1.5V4.5h-3" stroke={A} fill="none" /></>,
  save: <><path d="M1.5 1.5h13v13h-13z" fill="#7a7a1a" stroke={A} /><path d="M4 2h8v6H4z" fill="#fff" /><path d="M5 10h6v4H5z" fill="#222" /></>,
  mail: <><path d="M4 1h8l3 3v8H4z" fill="#fff" stroke={A} /><path d="M1 8h11v6H1zM1 8l5.5 3.5L12 8" fill="#fff" stroke={A} /></>,
  print: <><path d="M4 6l2-5h7l-2 5" fill="#fff" stroke={A} /><path d="M1 6.5h13v5H1zM3 11.5h10v3H3z" fill="#c8c8c8" stroke={A} /><path d="M9 13h3" stroke="#dd2" strokeWidth="2" /></>,
  print2: <><path d="M4 6l1-4h8l-2 4M2 1h12" fill="#fff" stroke={A} /><path d="M2 7h12v4H2zM4 11h8v4H4z" fill="#ccc" stroke={A} /></>,
  preview: <><path d="M2 1h8l3 3v11H2z" fill="#fff" stroke={A} /><circle cx="9.5" cy="9" r="3.5" fill="#a8e8f0" stroke={A} /><path d="M12 12l3 3" stroke={A} strokeWidth="2" /></>,
  spell: <><path d="M1 5L2.5 1L4 5M1.5 4h2M5.5 1v4h1.8V1zM5.5 3h1.8M12 1.5H9.5V5H12" stroke={A} fill="none" strokeWidth=".8" /><path d="M4 10l3 4L13 5" stroke="#2a2ad0" strokeWidth="2" fill="none" /></>,
  cut: <><path d="M5 1l4 9M11 1L7 10" stroke={A} strokeWidth="1.2" /><circle cx="5.5" cy="12.5" r="2" fill="none" stroke="#22a" strokeWidth="1.4" /><circle cx="10.5" cy="12.5" r="2" fill="none" stroke="#22a" strokeWidth="1.4" /></>,
  copy: <><path d="M1.5 1.5h7v9h-7zM6.5 5.5h8v9h-8z" fill="#fff" stroke="#22307a" /><path d="M3 4h4M3 6h3M8 8h5M8 10h5M8 12h5" stroke="#22307a" /></>,
  paste: <><path d="M1.5 2.5h11v11h-11z" fill="#8c8440" stroke={A} /><path d="M4 1h6v3H4z" fill="#ddd" stroke={A} /><path d="M7.5 6.5h7.5v8.5H7.5z" fill="#fff" stroke="#22307a" /><path d="M9 9h4M9 11h4" stroke="#22307a" /></>,
  brush: <><path d="M1 9l6-4 4 4-4 6-3-1z" fill="#f5e66a" stroke={A} /><path d="M8 5l5-4 2 2-4 5z" fill="#444" stroke={A} /></>,
  undo: <path d="M2 4v6h6M2.5 9.5C5 4 12 4 13 10" stroke="#22229a" strokeWidth="1.6" fill="none" />,
  redo: <path d="M14 4v6H8M13.5 9.5C11 4 4 4 3 10" stroke="#b8b5a5" strokeWidth="1.6" fill="none" />,
  link: <><circle cx="7" cy="6.5" r="5.5" fill="#1d5fa8" /><path d="M3 4c3-4 7-2 6 1s-3 1-3 5" fill="#3aa85a" /><path d="M4 12h5M8 13.5h6" stroke={A} strokeWidth="3" /><path d="M5 12h2M9 13.5h3" stroke="#fff" /></>,
  sum: <path d="M12.5 4V2H3l5 6-5 6h9.5v-2" stroke={A} strokeWidth="1.6" fill="none" />,
  fx: <path d="M2 14c4 1 3-12 8-11M3 7h5M8 8l5 5M13 8l-5 5" stroke={A} strokeWidth="1.5" fill="none" />,
  az: <><path d="M1 7L3.5 1L6 7M2 5h3" stroke="#22b" fill="none" strokeWidth="1.2" /><path d="M1 9h5l-5 6h5" stroke="#b22" fill="none" strokeWidth="1.2" /><path d="M11.5 1v12M9 10.5l2.5 3.5L14 10.5" stroke={A} fill="none" strokeWidth="1.2" /></>,
  za: <><path d="M1 15L3.5 9L6 15M2 13h3" stroke="#22b" fill="none" strokeWidth="1.2" /><path d="M1 1h5l-5 6h5" stroke="#b22" fill="none" strokeWidth="1.2" /><path d="M11.5 1v12M9 10.5l2.5 3.5L14 10.5" stroke={A} fill="none" strokeWidth="1.2" /></>,
  chart: <><path d="M1 5h4v10H1z" fill="#22b" stroke={A} /><path d="M6 1h4v14H6z" fill="#fc2" stroke={A} /><path d="M11 4h4v11h-4z" fill="#d22" stroke={A} /></>,
  shapes: <><path d="M3 11L8 2h6v8z" fill="#e8d23a" stroke={A} /><path d="M1 8h7v6H1z" fill="#2ab0d0" stroke="#114" /><path d="M9 9h5v6H9z" fill="#22b" /></>,
  left: <path d="M1 2.5h14M1 5.5h9M1 8.5h14M1 11.5h9M1 14h14" stroke={A} strokeWidth="1.2" />,
  mid: <path d="M1 2.5h14M3.5 5.5h9M1 8.5h14M3.5 11.5h9M1 14h14" stroke={A} strokeWidth="1.2" />,
  right: <path d="M1 2.5h14M6 5.5h9M1 8.5h14M6 11.5h9M1 14h14" stroke={A} strokeWidth="1.2" />,
  merge: <path d="M1 1.5h14v13H1zM1 5h14M1 11h14M8 1.5V5M8 11v3.5M3 8h3M13 8h-3M6.5 9.5h3v-3h-3" stroke={A} fill="#fff" />,
  money: <><path d="M1 3h13v7H1z" fill="#7ab88a" stroke={A} /><circle cx="7" cy="6.5" r="2" fill="#fff" /><circle cx="11" cy="12" r="3" fill="#e8d23a" stroke={A} /></>,
  outdent: <path d="M1 2.5h14M8 5.5h7M8 8.5h7M8 11.5h7M1 14h14M6 8H1M3.5 5.5L1 8l2.5 2.5" stroke={A} fill="none" strokeWidth="1.2" />,
  indent: <path d="M1 2.5h14M8 5.5h7M8 8.5h7M8 11.5h7M1 14h14M1 8h5M3.5 5.5L6 8l-2.5 2.5" stroke={A} fill="none" strokeWidth="1.2" />,
  fill: <><path d="M3 7l5-5 5 5-5 4z" fill="#fff" stroke={A} /><path d="M13 6c2 2 2 3 1 5" stroke="#22b" strokeWidth="2" fill="none" /><path d="M1 13.5h14" stroke="#ffea00" strokeWidth="3" /></>,
  pen: <><path d="M5 9L12 1l2 2-6 7z" fill="#e8d23a" stroke={A} /><path d="M1 13.5h14" stroke="#0000e0" strokeWidth="3" /></>,
  color: <><path d="M3.5 10L8 1l4.5 9M5 7.5h6" stroke="#1a2a80" strokeWidth="1.8" fill="none" /><path d="M1 13.5h14" stroke="#ff0000" strokeWidth="3" /></>,
  pointer: <path d="M5 1v12l3-3 2 5 2-1-2-4.5h4z" fill="#fff" stroke={A} />,
  spin: <path d="M12 4A6 6 0 1 0 14 9M12 1v4H8M6 9h4M8 7v4" stroke="#aaa695" strokeWidth="1.4" fill="none" />,
  line: <path d="M2 2l11 12" stroke={A} />,
  arrow: <path d="M2 2l11 12M13 8v6H7z" stroke={A} fill={A} />,
  rect: <path d="M1.5 2.5h13v11h-13z" fill="none" stroke={A} />,
  oval: <ellipse cx="8" cy="8" rx="7" ry="5.5" fill="none" stroke={A} />,
  text: <><path d="M1.5 1.5h13v13h-13z" fill="#fff" stroke={A} /><path d="M3 7L5 3l2 4M9 4h4M9 6.5h4M3 9.5h10M3 12h10" stroke={A} fill="none" /></>,
  vtext: <><path d="M1.5 1.5h13v13h-13z" fill="#fff" stroke={A} /><path d="M4 3v10M7 3v10M10 9v4M12.5 9v4M9.5 7l1.5-4 1.5 4" stroke={A} fill="none" /></>,
  art: <path d="M1 14L8 2h6v12h-4v-4H7l-2 4z" fill="#2a3fd0" stroke="#0a1a60" />,
  clip: <><path d="M1.5 1.5h13v13h-13z" fill="#fff" stroke="#a22" /><circle cx="8" cy="6" r="3" fill="#8a3a1a" /><path d="M3.5 14c0-6 9-6 9 0z" fill="#c22" /></>,
  thick: <path d="M1 4h14M1 8h14M1 12.5h14" stroke={A} strokeWidth="2" />,
  dash: <path d="M1 4h14M1 8h14M1 12h14" stroke={A} strokeWidth="1.2" strokeDasharray="3 1" />,
};

const SheetMenu = styled.div`
  flex: none;
  height: 17px;
  display: flex;
  align-items: center;
  gap: 6px;
  padding-left: 6px;
  font-size: 9px;
  white-space: nowrap;
  border-bottom: 1px solid #d5d1bf;
`;

const Mini = styled.span`
  display: flex;
  gap: 2px;
  margin-left: auto;
  align-self: center;
  padding-right: 2px;
  button { width: 10px; height: 10px; padding: 0; line-height: 7px; font-size: 7px; background: ${FACE}; border: 1px solid; border-color: #fff #555 #555 #fff; display: grid; place-items: center; }
`;

const SheetTools = styled.div`
  flex: none;
  height: ${(p) => p.$h}px;
  display: flex;
  align-items: center;
  justify-content: space-between;
  padding: 0 3px 0 6px;
  border-bottom: 1px solid #d5d1bf;
  white-space: nowrap;
  font-size: 9px;
  line-height: 13px;
`;

const ToolButton = styled.button`
  padding: 0;
  border: 0;
  background: ${(p) => (p.$down ? "#f8f6ec" : "transparent")};
  ${(p) => p.$down && css`outline: 1px solid #c5c2b2;`}
`;

const Letter = styled.span`
  width: 13px;
  text-align: center;
  font: bold 10px "Liberation Serif", serif;
  font-style: ${(p) => (p.$i ? "italic" : "normal")};
  text-decoration: ${(p) => (p.$u ? "underline" : "none")};
`;

const Sep = styled.i`
  width: 1px;
  height: 15px;
  background: #aca899;
`;

const FlatBox = styled.span`
  width: ${(p) => p.$w}px;
  height: 13px;
  background: #fff;
  display: flex;
  align-items: center;
  justify-content: space-between;
  padding: 0 2px;
  line-height: 12px;
`;

const HiddenTools = styled.span`
  width: 66px;
`;

const More = () => (
  <svg width="6" height="13" viewBox="0 0 7 16">
    <path d="M1 2l2 2-2 2M4 2l2 2-2 2" stroke={A} fill="none" />
    <path d="M1 11h5L3.5 14z" fill={A} />
  </svg>
);

function Tools({ names }) {
  return names.map((n, i) => {
    if (n === "|") return <Sep key={i} />;
    if (n === "v") return <Caret key={i} size={4} />;
    if (n === ">>") return <More key={i} />;
    if (typeof n !== "string") return React.cloneElement(n, { key: i });
    return (
      <ToolButton key={i} aria-label={n} $down={n === "link" || n === "shapes"}>
        <G>{art[n]}</G>
      </ToolButton>
    );
  });
}

const FormulaBar = styled.div`
  flex: none;
  display: grid;
  grid-template-columns: 91px 11px 43px 1fr;
  height: 14px;
  margin: 0 1px;
  font-size: 9px;
  line-height: 13px;
  border-bottom: 1px solid #77756a;
  > * { padding: 0 4px; text-align: center; }
  input { border: 0; background: #fff; min-width: 0; text-align: left; border-left: 1px solid #aca899; }
  button { background: ${FACE}; border: 1px solid; border-color: #fff #777 #777 #fff; display: grid; place-items: center; padding: 0; }
`;

const CellName = styled.span`
  background: #fff;
`;

const SheetArea = styled.div`
  flex: none;
  display: grid;
  grid-template-columns: minmax(0, 1fr) 12px;
  height: 296px;
  margin: 1px 1px 0 1px;
  overflow: hidden;
`;

const Grid = styled.table`
  border-collapse: collapse;
  table-layout: fixed;
  width: 100%;
  height: 300px;
  background: #fff;
  font-size: 8px;
  line-height: 8px;
  font-feature-settings: normal;
  white-space: nowrap;
  th { font-weight: 400; background: ${FACE}; border: 1px solid #8f8c7d; border-top-color: #fff; padding: 0; height: 10px; }
  td { border: 1px solid #c0c0c0; padding: 0 1px; height: 10px; overflow: visible; }
  td:nth-child(n + 5) { text-align: right; }
  tr:first-child td:nth-child(n + 5) { text-align: left; }
`;

const SHEET = `14771 738 15509
3198 159 3357
3168 158 3326
4559 227 4786
8688 434 9122
2649 132 2781
5119 255 5374
2090 104 2194
2990 149 3139
2255 112 2367
6481 324 6805
6061 303 6364
4460 223 4683
2150 107 2257
10366 518 10884
3728 186 3914
3646 182 3828
2258 112 2370
4014 200 4214
9853 492 10345
2090 104 2194
3307 165 3472
3725 186 3911
5601 280 5881
2090 104 2194
2518 125 2643
2090 104 2194`.split("\n").map((l) => l.split(" "));

const Hatch = styled.i`
  background: repeating-conic-gradient(#333 0 25%, #eee 0 50%) 0 0 / 2px 2px;
  ${(p) => (p.$v ? css`flex: 1;` : css`width: ${p.$len};`)}
`;

const TabStrip = styled.div`
  flex: none;
  height: 13px;
  display: flex;
  align-items: stretch;
  font-size: 9px;
  line-height: 12px;
  button { width: 12px; height: 12px; }
`;

const SheetTab = styled.span`
  margin-left: 2px;
  padding: 0 6px;
  background: #fff;
  border: solid #000;
  border-width: 0 1px;
  text-decoration: underline;
`;

const Status = styled.div`
  flex: none;
  height: 13px;
  margin-top: 1px;
  display: flex;
  gap: 2px;
  padding: 1px 16px 0 4px;
  line-height: 11px;
  font-size: 9px;
  white-space: nowrap;
`;

const StatusCell = styled.span`
  width: ${(p) => p.$w}px;
  border: 1px solid;
  border-color: #aca899 #fff #fff #aca899;
  line-height: 9px;
  text-align: center;
`;

const Tip = styled.span`
  position: absolute;
  left: 290px;
  top: 64px;
  width: 76px;
  height: 13px;
  border: 1px solid #000;
  background: #ffffe1;
  font-size: 8px;
  line-height: 11px;
  text-align: center;
  white-space: nowrap;
`;

const EndBox = styled.div`
  width: 158px;
  height: 43px;
  margin: 5px 0 0 195px;
  border: 3px double #0000c8;
  color: #0000d8;
  font: 19px/37px "DejaVu Sans", sans-serif;
  text-align: center;
`;

const Heading = styled.p`
  grid-column: 1 / -1;
  color: ${RED};
  font-size: 10px;
  line-height: 13px;
  white-space: nowrap;
  padding-left: ${(p) => (p.$in ? 17 : 2)}px;
`;

/* ---------- the steps ---------- */

const BigLabel = styled.label`
  width: 45px;
  font-size: 9px;
  text-align: right;
`;

const LoginInput = styled.input`
  width: ${(p) => p.$w}px;
  height: ${(p) => (p.$dark ? 13 : 14)}px;
  padding: 0 2px;
  border: 1px solid ${(p) => (p.$dark ? "#000" : "#7f9db9")};
  background: #fff;
  outline: none;
  border-radius: 0;
`;

function LoginPage() {
  const a = useId();
  const b = useId();
  return (
    <WebFrame $h={228}>
      <WebHead $h={40} $band={11} $gap={6} $pad={6}>
        <InvoiceLogo w={97} h={22} size={13} />
        <WebTitle $size={9} $pt={7}><big>@web</big> 会員ページ</WebTitle>
      </WebHead>
      <WebBody>
        <SideBrand $w={43} $pt={5} $size={52}><span>@web</span></SideBrand>
        <WebMain $pad="15px 26px 0">
          <Banner h={20} size={11} brand={15} />
          <Intro $mt={18} $lh={12} $pl={21}><b>GENERAL INVOICE@web</b> のご利用状況をオンラインでご覧いただけます。<br />ユーザーID、パスワードを入力し、ログインボタンをクリックしてください。</Intro>
          <BluePanel $h={70} $m="17px 43px 0 44px" $p="10px 0 0">
            <Row $h={13} $gap={5} $pl={35}>
              <BigLabel htmlFor={a}>ユーザーID</BigLabel>
              <LoginInput id={a} $w={102} $dark />
            </Row>
            <Row $h={14} $mt={4} $gap={5} $pl={35}>
              <BigLabel htmlFor={b}>パスワード</BigLabel>
              <LoginInput id={b} type="password" defaultValue="password10" $w={120} />
            </Row>
            <Row $mt={4} $pl={100}><XpButton $w={40} $h={12} $size={9} $focus>ログイン</XpButton></Row>
          </BluePanel>
          <Dashes $mt={21} />
        </WebMain>
      </WebBody>
    </WebFrame>
  );
}

const MENU = [
  ["料金内訳", "回線別やグループ別に全体・市内・市外料金の内訳を閲覧"],
  ["請求内訳", "請求内訳の閲覧(検索も可能)"],
  ["通話明細", "通話明細の閲覧(検索も可能)"],
  ["統計表", "通信料金の統計をグラフで閲覧"],
];

const MenuRow = styled.div`
  flex: none;
  display: flex;
  align-items: center;
  gap: 5px;
  height: 14px;
  margin-bottom: 11px;
  font-size: 9px;
  white-space: nowrap;
`;

function MainMenu() {
  return (
    <WebFrame $h={375}>
      <WebHead $h={46} $band={12} $gap={8} $pad={6}>
        <InvoiceLogo w={114} h={26} size={15} />
        <WebTitle $size={11} $pt={12}><big>@web</big> 会員ページ</WebTitle>
      </WebHead>
      <WebBody>
        <SideBrand $w={50} $pt={6} $size={62}><span>@web</span></SideBrand>
        <WebMain $pad="19px 30px 0">
          <Banner h={22} size={13} brand={18} />
          <NameRow $m="21px 0 0" $size={11}><strong><Blank />様</strong><Blank /></NameRow>
          <Dashes $mt={3} />
          <Bar $h={21} $mt={18} $size={15} $pl={6} $bg="repeating-linear-gradient(25deg,rgba(255,255,255,.15) 0 2px,transparent 2px 4px), linear-gradient(90deg,#66b0f8,#a8d4fc 50%,#88c4ff)">メインメニュー</Bar>
          <Intro $mt={14} $lh={12}>ゼネラルインボイスのご利用まことにありがとうございます。閲覧したい請求データの月(当月・前月・前々<br />月)を選択し、該当項目ボタンをクリックしてください。</Intro>
          <BluePanel $b={2} $h={147} $m="24px 0 0" $p="13px 0 0 13px">
            <Row $h={14} $gap={5}>
              <Orange $size={11}>処理月</Orange>
              <Combo label="処理月" value="11月" w={40} h={14} />
            </Row>
            <Row $h={14} />
            {MENU.map(([k, d]) => (
              <MenuRow key={k}><XpButton $w={65} $h={14} $size={9}>{k}</XpButton>{d}</MenuRow>
            ))}
          </BluePanel>
        </WebMain>
      </WebBody>
    </WebFrame>
  );
}

const CHARGES = [
  ["回線別一覧", "回線別の料金一覧表の閲覧"],
  ["回線別一覧(市内内訳)", "回線別の市内料金内訳の閲覧"],
  ["回線別一覧(市外・国際)", "回線別の市外料金・国際料金内訳の閲覧"],
  ["グループ別一覧", "グループ別の料金一覧表の閲覧"],
  ["グループ別一覧(市内内訳)", "グループ別の市内料金内訳の閲覧"],
  ["グループ別一覧(市外・国際)", "グループ別の市外料金・国際料金内訳の閲覧"],
];

const ChargeList = styled.div`
  height: 105px;
  margin-top: 9px;
  display: flex;
  flex-direction: column;
  justify-content: space-between;
  > div { display: flex; align-items: center; gap: 4px; white-space: nowrap; }
`;

const Format = styled.div`
  display: flex;
  align-items: stretch;
  width: 137px;
  height: 17px;
  border: 1px solid #6699ee;
  background: #eef6ff;
  > b { width: 43px; background: #6699ee; color: #fff; font-weight: 400; line-height: 14px; text-align: center; }
  label { padding-left: 10px; }
`;

const Inset = styled.div`
  margin: 0 16px;
`;

function Breakdown() {
  return (
    <WebFrame $h={295} $ml={3}>
      <WebBody>
        <SideBrand $w={43} $pt={0} $size={52}><span>@web</span></SideBrand>
        <WebMain $pad="9px 7px 0 9px">
          <Inset><Banner h={20} size={11} brand={15} /></Inset>
          <NameRow $m="16px 0 0" $size={10}><strong><Blank />様</strong><Blank /></NameRow>
          <Inset>
            <Dashes $mt={3} />
            <Bar $h={17} $mt={15} $size={12} $pl={4} $bg="radial-gradient(circle,rgba(255,255,255,.35) 2px,transparent 3px) 0 0/8px 6px, linear-gradient(90deg,#80b896,#8fd0a8 35%,#cdeed8 60%,#fff)">料 金 内 訳</Bar>
            <Intro $mt={12} $lh={11} $size={8}>閲覧したい一覧データのボタンをクリックしてください。テキストファイルで閲覧したい場合は、テキストにチ<br />ェックを入れてください。</Intro>
            <BluePanel $h={160} $m="19px 0 0" $p="9px 9px 0 9px">
              <Row $justify="space-between" $h={17}>
                <Orange $size={9}>11月 料金内訳</Orange>
                <Format>
                  <b>ファイル形式</b>
                  <CheckLabel><Tick $s={8} type="radio" name="fmt" defaultChecked />テキスト</CheckLabel>
                  <CheckLabel><Tick $s={8} type="radio" name="fmt" />PDF</CheckLabel>
                </Format>
              </Row>
              <ChargeList>
                {CHARGES.map(([k, d]) => (
                  <div key={k}><XpButton $w={121} $h={11}>{k}</XpButton>{d}</div>
                ))}
              </ChargeList>
            </BluePanel>
          </Inset>
        </WebMain>
      </WebBody>
    </WebFrame>
  );
}

function DownloadDialog() {
  return (
    <Window title="ファイルのダウンロード" size={9} caps={["close"]} h={196}>
      <Body $p="10px 16px 0 14px">
        <p>このファイルを開くか、または保存しますか?</p>
        <InfoGrid>
          <ZipIcon size={24} />
          <dt>名前:</dt><dd>PKM11_20050121092511.zip</dd>
          <dt>種類:</dt><dd>ZIP書庫ファイル, 719 バイト</dd>
          <dt>発信元:</dt><dd>web.invoice.ne.jp</dd>
        </InfoGrid>
        <Row $mt={14} $gap={8} $justify="flex-end">
          <XpButton $w={66}>開く(O)</XpButton>
          <XpButton $w={66}>保存(S)</XpButton>
          <XpButton $w={66} $focus>キャンセル</XpButton>
        </Row>
        <Row $mt={12}><CheckLabel $h={10}><Tick type="checkbox" defaultChecked />この種類のファイルであれば常に警告する(W)</CheckLabel></Row>
        <Rule />
        <Row $mt={6} $gap={17} $align="flex-start" $pl={1}>
          <Shield />
          <Notice>インターネットのファイルは役に立ちますが、ファイルによってはコンピュータに問題を<br />起こすものもあります。発信元が信頼できない場合は、このファイルを開いたり保<br />存したりしないでください。<a href="#risk">危険性の説明</a></Notice>
        </Row>
      </Body>
    </Window>
  );
}

function SaveDialog() {
  const ids = [useId(), useId(), useId()];
  return (
    <Window title="名前を付けて保存" caps={["help", "close"]} h={287}>
      <Body $p="5px 6px 0 7px">
        <Row $h={16}>
          <FieldName htmlFor={ids[0]} $w={73} $align="right">保存する場所(I):</FieldName>
          <Row $pl={7} $gap={6}>
            <Combo id={ids[0]} value="日鉄ブリッジ" icon={<FolderIcon size={12} />} w={224} h={16} />
            <span />
            <Circle left size={11} />
            <UpFolder size={11} />
            <NewFolder size={12} />
            <ViewIcon size={12} />
            <Caret size={4} />
          </Row>
        </Row>
        <Row $mt={4} $gap={6} $align="stretch" $h={235}>
          <SavePlaces>
            <SavePlace><FolderIcon size={16} />Recent</SavePlace>
            <SavePlace><DeskIcon />デスクトップ</SavePlace>
            <SavePlace><DocsFolder />マイ ドキュメント</SavePlace>
            <SavePlace><Monitor />マイ コンピュータ</SavePlace>
            <SavePlace><Monitor globe />マイ ネットワーク</SavePlace>
          </SavePlaces>
          <Column>
            <FileArea />
            <Row $mt={7} $h={15}>
              <FieldName htmlFor={ids[1]} $w={82}>ファイル名(N):</FieldName>
              <Combo id={ids[1]} edit selected value="PKM11_20050121092946.zip" w={211} />
              <Spacer />
              <XpButton $w={63} $focus>保存(S)</XpButton>
            </Row>
            <Row $mt={4} $h={15}>
              <FieldName htmlFor={ids[2]} $w={82}>ファイルの種類(T):</FieldName>
              <Combo id={ids[2]} value="ZIP書庫ファイル" w={211} />
              <Spacer />
              <XpButton $w={63}>キャンセル</XpButton>
            </Row>
            <Row $h={2} />
          </Column>
        </Row>
      </Body>
    </Window>
  );
}

function DoneDialog() {
  return (
    <Window title="ダウンロードの完了" size={9} caps={["min", "max", "close"]} off={["max"]} h={184}>
      <Body $p="11px 11px 0 9px">
        <Row $gap={26} $align="flex-end"><DownloadDone /><span>ダウンロードの完了</span></Row>
        <Row $mt={8}>保存しました</Row>
        <Row $mt={3}>web.invoice.ne.jp - PKM11_20050121092946.zip</Row>
        <Progress role="progressbar" aria-label="ダウンロード" />
        <Facts>
          <dt>ダウンロード:</dt><dd>719 バイト を 3 秒</dd>
          <dt>ダウンロード先:</dt><dd>C:¥ffftp¥...¥PKM11_20050121092946.zip</dd>
          <dt>転送率:</dt><dd>239 バイト/秒</dd>
        </Facts>
        <Row $mt={4}><CheckLabel $h={10}><Tick type="checkbox" />ダウンロードの完了後、このダイアログ ボックスを閉じる(C)</CheckLabel></Row>
        <Row $mt={7} $gap={8} $justify="flex-end">
          <XpButton $w={71}>ファイルを開く(O)</XpButton>
          <XpButton $w={71}>フォルダを開く(F)</XpButton>
          <XpButton $w={71} $focus>閉じる</XpButton>
        </Row>
      </Body>
    </Window>
  );
}

const XLW = "Microsoft Excel ワ...";
const FILES7 = [
  ["xls", "JT電話実績.xls", "118 KB", XLW, "2005/01/17 18:13"],
  ["xls", "OCN-IP電話通話料.xls", "1,430 KB", XLW, "2005/01/17 17:08"],
  ["xls", "Book2.xls", "2,889 KB", XLW, "2005/01/21 9:29"],
  ["zip", "PKM11_20050121092946.zip", "1 KB", "ZIP書庫ファイル", "2005/01/21 9:30", true],
];
const FILES9 = [
  ["dir", "PKM11_20050121092946", "", "ファイル フォルダ", "2005/01/21 9:48"],
  ["xls", "Book2.xls", "2,889 KB", XLW, "2005/01/21 9:29"],
  ["xls", "JT電話実績.xls", "118 KB", XLW, "2005/01/17 18:13"],
  ["xls", "OCN-IP電話通話料.xls", "1,430 KB", XLW, "2005/01/17 17:08", true],
  ["zip", "PKM11_20050121092946.zip", "1 KB", "ZIP書庫ファイル", "2005/01/21 9:30"],
];

const NotePad = () => (
  <svg width="10" height="12" viewBox="0 0 12 14">
    <path d="M1 2h10v11H1z" fill="#eef7fb" stroke="#5a7f92" />
    <path d="M3 5h6M3 7h6M3 9h6M3 11h4M2.5 1v2M5 1v2M7.5 1v2M10 1v2" stroke="#4a7890" />
  </svg>
);

const OpenFace = styled.span`
  display: flex;
  align-items: center;
  justify-content: space-between;
  padding: 0 3px;
`;

function OpenDialog() {
  const ids = [useId(), useId(), useId()];
  return (
    <Window title="ファイルを開く" size={9} caps={["help", "close"]} h={268}>
      <Body $p="2px 2px 0 3px">
        <Row $h={16}>
          <FieldName htmlFor={ids[0]} $w={70}>ファイルの場所(<u>I</u>):</FieldName>
          <Combo id={ids[0]} old value="PKM11_20050121092946" icon={<FolderIcon size={12} />} w={157} />
          <Row $gap={6} $pl={8}>
            <svg width="10" height="10" viewBox="0 0 12 12"><path d="M1 6l5-4v2.5h5v3H6V10z" fill="#39d5e0" stroke="#134" /></svg>
            <svg width="11" height="12" viewBox="0 0 14 14"><path d="M1 3h4l1 1h7v9H1z" fill="#fbf7a0" stroke="#222" /><path d="M5 11h4M7 11V6M5 8l2-2 2 2" stroke="#222" fill="none" /></svg>
            <Sep />
            <svg width="13" height="14" viewBox="0 0 16 16"><circle cx="7" cy="7" r="6" fill="#2a7fc8" /><path d="M3 5c3-4 7-2 5 2s-2 2-3 4" fill="#3aa85a" /><circle cx="9" cy="9" r="3.5" fill="#cfe9fb" stroke="#222" /><path d="M12 12l3 3" stroke="#c22" strokeWidth="2.4" /></svg>
            <svg width="9" height="11" viewBox="0 0 10 12"><path d="M1 1l8 10M9 1L1 11" stroke="#000" strokeWidth="1.5" /></svg>
            <svg width="12" height="13" viewBox="0 0 15 16"><path d="M1 5h5l1 2h6v8H1z" fill="#fbf7a0" stroke="#222" /><path d="M11 0v8M7 4h8M8.5 1.5l5 5M13.5 1.5l-5 5" stroke="#b0a020" /></svg>
            <svg width="12" height="13" viewBox="0 0 14 14"><path d="M1 1h12v12H1z" fill="#fff" stroke="#111" /><path d="M1 2.5h12" stroke="#1a2fa0" strokeWidth="3" /><path d="M3 6.5h8M3 8.8h8M3 11h8" stroke="#333" strokeDasharray="2 1" /></svg>
            <Caret size={4} />
            <span>ツール(<u>L</u>)</span>
            <Caret size={4} />
          </Row>
        </Row>
        <Row $mt={2} $gap={4} $align="stretch" $h={222}>
          <OldPlaces>
            <OldPlace><FilePile mark="clock" />履歴</OldPlace>
            <OldPlace><FilePile />My Documents</OldPlace>
            <OldPlace><OldDesk />デスクトップ</OldPlace>
            <OldPlace><FilePile mark="star" />お気に入り</OldPlace>
            <OldPlace><FilePile mark="net" />マイ ネットワーク</OldPlace>
          </OldPlaces>
          <Column>
            <FileArea $old><TextFile><NotePad /><span>PKM11_20050121092946.txt</span></TextFile></FileArea>
            <Row $mt={2} $h={15}>
              <FieldName htmlFor={ids[1]} $w={67}>ファイル名(<u>N</u>):</FieldName>
              <Combo id={ids[1]} old edit value="" w={208} h={14} />
              <Spacer />
              <OldButton $w={82} $default><OpenFace><OpenFolder size={12} /><span>開く(<u>O</u>)</span><Caret size={4} /></OpenFace></OldButton>
            </Row>
            <Row $mt={3} $h={15}>
              <FieldName htmlFor={ids[2]} $w={67}>ファイルの種類(<u>T</u>):</FieldName>
              <Combo id={ids[2]} old value="すべてのファイル (*.*)" w={208} h={14} />
              <Spacer />
              <OldButton $w={82}>キャンセル</OldButton>
            </Row>
          </Column>
        </Row>
      </Body>
    </Window>
  );
}

const Spin = styled.span`
  display: flex;
  width: 42px;
  height: 13px;
  background: #fff;
  border: 1px solid #444;
  border-right-color: #fff;
  border-bottom-color: #fff;
  input { flex: 1; width: 0; min-width: 0; border: 0; padding: 0 1px; background: none; }
  i { width: 12px; display: flex; flex-direction: column; align-items: center; justify-content: space-around; background: ${FACE}; border: 1px solid; border-color: #fff #777 #777 #fff; }
`;

function Wizard1() {
  const id = useId();
  return (
    <Window title="テキスト ファイル ウィザード - 1 / 3" caps={["help", "close"]} h={264}>
      <Body $p="3px 0 0 5px">
        <Row $h={11}>選択したデータは区切り文字で区切られています。</Row>
        <Row $h={11}>[次へ] をクリックするか、区切るデータの形式を指定してください。</Row>
        <Row $mt={5} $pr={7} $align="stretch">
          <Column>
            <Group $h={44} $p="6px 4px">
              <Legend>元のデータの形式</Legend>
              <Row $h={10}>データのファイル形式を選択してください :</Row>
              <Row $h={12} $mt={3} $pl={9}><CheckLabel><Tick $old $s={8} type="radio" name="w1" defaultChecked /><Dotted>カンマやタブなどの区切り文字によってフィールドごとに区切られたデータ(<u>D</u>)</Dotted></CheckLabel></Row>
              <Row $h={11} $pl={9}><CheckLabel><Tick $old $s={8} type="radio" name="w1" /><span>スペースによって右または左に揃えられた固定長フィールドのデータ(<u>W</u>)</span></CheckLabel></Row>
            </Group>
          </Column>
        </Row>
        <Row $mt={6} $h={13} $pl={68}>
          <FieldName htmlFor={id} $w={80}>取り込み開始行(<u>R</u>):</FieldName>
          <Spin><input id={id} defaultValue="1" /><i><Caret size={3} dir="up" /><Caret size={3} /></i></Spin>
        </Row>
        <Row $mt={29} $h={10} $pl={6}>ファイル C:¥ffftp¥www¥Network提案¥日鉄ブリッジ¥P...¥PKM11_20050121092946.txt のプレビュー</Row>
        <Row $pl={6} $pr={12} $align="stretch">
          <Column>
            <Scrolls off mt={9}>
              <RawText>
                <li><i>1</i>グループ1,グループ名1,電話番号,,,,,,,,,,,,携帯,,消費税,合計</li>
                <li><i>2</i>00000,,080-394-　　　,,,,,,,,,,,,14771,,738,15509</li>
                <li><i>3</i>00000,,080-395-　　　,,,,,,,,,,,,3198,,159,3357</li>
                <li><i>4</i>00000,,080-395-　　　,,,,,,,,,,,,3168,,158,3326</li>
                <li><i /></li>
              </RawText>
            </Scrolls>
          </Column>
        </Row>
        <WizardFoot first mt={10} />
      </Body>
    </Window>
  );
}

const SmallBox = styled.input`
  width: 17px;
  height: 12px;
  padding: 0;
  border: 1px solid;
  border-color: #444 #fff #fff #444;
  background: #fff;
`;

function Wizard2() {
  const id = useId();
  const box = (t, k, w, on, dot) => (
    <CheckLabel $w={w} $gap={3}><Tick $old type="checkbox" defaultChecked={on} />{dot ? <Dotted>{t}(<u>{k}</u>)</Dotted> : <span>{t}(<u>{k}</u>)</span>}</CheckLabel>
  );
  return (
    <Window title="テキスト ファイル ウィザード - 2 / 3" caps={["help", "close"]} h={264}>
      <Body $p="5px 0 0 4px">
        <Row $pl={4}><Notice>フィールドの区切り文字を指定してください。[データのプレビュー] ボックスには区切り位<br />置が表示されます。</Notice></Row>
        <Row $mt={12} $pl={5} $align="flex-start" $gap={8}>
          <Group $w={185} $h={37} $p="6px 0 0 11px">
            <Legend>区切り文字</Legend>
            <Row $h={13}>{box("タブ", "T", 59, false, true)}{box("セミコロン", "M", 66)}{box("カンマ", "C", 48, true)}</Row>
            <Row $h={15}>
              {box("スペース", "S", 59)}{box("その他", "O", 66)}
              <SmallBox aria-label="その他の文字" />
            </Row>
          </Group>
          <Row $h={15} $mt={5}>
            <FieldName htmlFor={id} $w={84}>文字列の引用符(<u>Q</u>):</FieldName>
            <Combo id={id} old value="&quot;" w={69} />
          </Row>
        </Row>
        <Row $mt={4} $h={10} $pl={3}><CheckLabel><Tick $old type="checkbox" /><span>連続した区切り文字は 1 文字として扱う(<u>R</u>)</span></CheckLabel></Row>
        <Row $pr={9} $align="stretch">
          <Column>
            <Group $mt={33} $h={92} $p="0 3px 0 6px">
              <Legend>データのプレビュー</Legend>
              <Scrolls mt={23}><ColumnPreview h={55} /></Scrolls>
            </Group>
          </Column>
        </Row>
        <WizardFoot mt={9} />
      </Body>
    </Window>
  );
}

function Wizard3() {
  return (
    <Window title="テキスト ファイル ウィザード - 3 / 3" caps={["help", "close"]} h={264}>
      <Body $p="4px 0 0 5px">
        <Row $align="flex-start" $pr={6} $h={110}>
          <Column>
            <Row $pl={2} $h={11}>区切ったあとの列のデータ形式を選択してください。</Row>
            <Row $mt={16} $pl={9}><Notice>[G/標準] を選択すると、数字は数値に、日付は日<br />付形式の値に、その他の値は文字列に変換されま<br />す。</Notice></Row>
            <Row $mt={11} $pl={52}><OldButton $w={58}>詳細(<u>A</u>)...</OldButton></Row>
          </Column>
          <Group $w={164} $h={63} $mt={5} $p="4px 9px">
            <Legend>列のデータ形式</Legend>
            <Row $h={14}><CheckLabel><Tick $old $s={8} type="radio" name="w3" /><span>G/標準(<u>G</u>)</span></CheckLabel></Row>
            <Row $h={14}><CheckLabel><Tick $old $s={8} type="radio" name="w3" defaultChecked /><Dotted>文字列(<u>T</u>)</Dotted></CheckLabel></Row>
            <Row $h={14}>
              <CheckLabel $w={56}><Tick $old $s={8} type="radio" name="w3" /><span>日付(<u>D</u>):</span></CheckLabel>
              <Combo label="日付の形式" old value="YMD" w={56} h={14} />
            </Row>
            <Row $h={14}><CheckLabel><Tick $old $s={8} type="radio" name="w3" /><span>削除する(<u>I</u>)</span></CheckLabel></Row>
          </Group>
        </Row>
        <Row $pr={9} $align="stretch">
          <Column>
            <Group $mt={5} $h={92} $p="0 3px 0 6px">
              <Legend>データのプレビュー</Legend>
              <Scrolls mt={11} top><ColumnPreview h={67} head pick /></Scrolls>
            </Group>
          </Column>
        </Row>
        <WizardFoot last mt={9} />
      </Body>
    </Window>
  );
}

function Excel() {
  return (
    <Window title="Microsoft Excel - PKM11_20050121092946.txt" icon={<XlsIcon />} caps={["min", "max", "close"]} h={438}>
      <SheetMenu>
        <XlsIcon />
        {[["ファイル", "F"], ["編集", "E"], ["表示", "V"], ["挿入", "I"], ["書式", "O"], ["ツール", "T"], ["データ", "D"], ["ウィンドウ", "W"], ["ヘルプ", "H"]].map(([a, k]) => (
          <span key={k + a}>{a}(<u>{k}</u>)</span>
        ))}
        <Mini>
          <button aria-label="最小化"><svg width="6" height="6" viewBox="0 0 8 8"><path d="M1 7h6" stroke="#000" strokeWidth="2" /></svg></button>
          <button aria-label="元に戻す"><svg width="6" height="6" viewBox="0 0 8 8"><path d="M3 1h4v4M1 3h4v4H1z" stroke="#000" fill="none" /></svg></button>
          <button aria-label="閉じる"><svg width="6" height="6" viewBox="0 0 8 8"><path d="M1 1l6 6M7 1L1 7" stroke="#000" strokeWidth="2" /></svg></button>
        </Mini>
      </SheetMenu>
      <SheetTools $h={19}>
        <Tools names={["new", "open", "save", "mail", "|", "print", "print2", "preview", "spell", "|", "cut", "copy", "paste", "brush", "|", "undo", "v", "redo", "v", "|", "link", "sum", "fx", "az", "za", "|", "chart", "shapes", <FlatBox $w={42}>75%<Caret size={4} /></FlatBox>, ">>"]} />
      </SheetTools>
      <SheetTools $h={19}>
        <Tools names={[<FlatBox $w={92}>MS Pゴシック<Caret size={4} /></FlatBox>, <FlatBox $w={28}>11<Caret size={4} /></FlatBox>, "|", <Letter>B</Letter>, <Letter $i>I</Letter>, <Letter $u>U</Letter>, "|", "left", "mid", "right", "merge", "|", "money", <HiddenTools />, "outdent", "indent", "|", "fill", "v", "color", "v", ">>"]} />
      </SheetTools>
      <FormulaBar>
        <CellName>O8</CellName>
        <button aria-label="名前"><Caret size={5} /></button>
        <b>　 =</b>
        <input aria-label="数式" />
      </FormulaBar>
      <SheetArea>
        <Grid>
          <colgroup>{[19, 40, 40, 66, 40, 40, 40, 40, 40, 40].map((w, i) => <col key={i} width={w} />)}<col /></colgroup>
          <thead><tr><th />{"ABCDEFGHIJ".split("").map((c) => <th key={c}>{c}</th>)}</tr></thead>
          <tbody>
            <tr><th>1</th><td>グループ1</td><td>グループ名</td><td>電話番号</td><td /><td>携帯</td><td /><td>消費税</td><td>合計</td><td /><td /></tr>
            {SHEET.map(([a, b, c], i) => (
              <tr key={i}>
                <th>{i === 6 ? <b>8</b> : i + 2}</th>
                <td>00000</td><td /><td /><td /><td>{a}</td><td /><td>{b}</td><td>{c}</td><td /><td />
              </tr>
            ))}
          </tbody>
        </Grid>
        <OldTrack $v>
          <OldThumb $v $len="4px" />
          <OldCap aria-label="上へ"><Caret size={5} dir="up" /></OldCap>
          <OldThumb $v $len="181px" />
          <Hatch $v />
          <OldCap aria-label="下へ"><Caret size={5} /></OldCap>
        </OldTrack>
      </SheetArea>
      <TabStrip>
        <OldCap aria-label="先頭"><Caret size={5} dir="left" /></OldCap>
        <OldCap aria-label="前へ"><Caret size={5} dir="left" /></OldCap>
        <OldCap aria-label="次へ"><Caret size={5} dir="right" /></OldCap>
        <OldCap aria-label="末尾"><Caret size={5} dir="right" /></OldCap>
        <SheetTab>PKM11_20050121092946</SheetTab>
        <Spacer />
        <OldCap aria-label="左へ"><Caret size={5} dir="left" /></OldCap>
        <OldThumb $len="78px" />
        <Hatch $len="64px" />
        <OldCap aria-label="右へ"><Caret size={5} dir="right" /></OldCap>
        <Row $pl={14} />
      </TabStrip>
      <SheetTools $h={21}>
        <Tools names={[<span>図形の調整(<u>R</u>)</span>, "v", "pointer", "spin", "|", <span>オートシェイプ(<u>U</u>)</span>, "v", "line", "arrow", "rect", "oval", "text", "vtext", "art", "clip", "|", "fill", "v", "pen", "v", "color", "v", "thick", "dash", <span> </span>, ">>"]} />
      </SheetTools>
      <Status>
        コマンド<Spacer />
        <StatusCell $w={25} /><StatusCell $w={82} /><StatusCell $w={20} /><StatusCell $w={26}>CAPS</StatusCell>
        <StatusCell $w={22}>NUM</StatusCell><StatusCell $w={24} /><StatusCell $w={20} /><StatusCell $w={20} />
      </Status>
    </Window>
  );
}

export default function App() {
  return (
    <>
      <Global />
      <Page>
        <Step $gap={12}>
          <StepNo $top={4}>1</StepNo>
          <Figure $w={426}>
            <LoginPage />
            <Callout box={[16, 144, 116, 29]} tail="131,146 152,151 131,157"><span>①『ﾕｰｻﾞｰID』</span><span>②『ﾊﾟｽﾜｰﾄﾞ』を入力する。</span></Callout>
          </Figure>
        </Step>
        <Step $gap={11}>
          <StepNo $top={4}>2</StepNo>
          <Figure $w={501}>
            <MainMenu />
            <Callout box={[212, 240, 131, 16]} tail="234,255 159,277 265,255">①調査する項目をｸﾘｯｸする。</Callout>
          </Figure>
        </Step>
        <Step $gap={10}>
          <StepNo $top={3}>3</StepNo>
          <Figure $w={425}>
            <Breakdown />
            <Callout box={[212, 83, 98, 16]} tail="269,98 343,164 293,98">①ﾃｷｽﾄにﾁｪｯｸする。</Callout>
            <Callout box={[159, 131, 131, 16]} tail="181,146 222,188 214,146">②調査する項目をｸﾘｯｸする。</Callout>
          </Figure>
        </Step>
        <Step $gap={9}>
          <StepNo>4</StepNo>
          <Figure $w={347}>
            <DownloadDialog />
            <Callout box={[213, 36, 116, 15]} tail="232,50 245,107 260,50">①『保存(S)』をｸﾘｯｸする。</Callout>
          </Figure>
        </Step>
        <Step $gap={16}>
          <StepNo>5</StepNo>
          <Figure $w={483}>
            <SaveDialog />
            <Callout box={[224, 57, 128, 16]} tail="245,58 155,36 276,58">①保存ﾌｫﾙﾀﾞ名を指定する。</Callout>
            <Callout box={[318, 198, 105, 16]} tail="379,213 453,248 405,213">②『保存』をｸﾘｯｸする。</Callout>
          </Figure>
        </Step>
        <Step $gap={18}>
          <StepNo>6</StepNo>
          <Figure $w={321}>
            <DoneDialog />
            <Callout box={[323, 107, 145, 16]} tail="347,122 172,161 381,122">①『ﾌｫﾙﾀﾞを開く(F)』をｸﾘｯｸする。</Callout>
          </Figure>
        </Step>
        <Step $gap={15}>
          <StepNo>7</StepNo>
          <Figure $w={501}>
            <Explorer h={192} pane={158} cols={[132, 70, 90]} row={12} files={FILES7} gap={11} tgap={4} hscroll="256px" thumb="30px" />
            <Callout box={[333, 51, 114, 16]} tail="353,66 302,126 380,66">①ﾀﾞｳﾝﾛｰﾄﾞされたﾌｧｲﾙ。</Callout>
          </Figure>
        </Step>
        <Step $gap={7}>
          <StepNo>8</StepNo>
          <Figure $w={502}>
            <Explorer full h={411} pane={150} cols={[126, 68, 84]} row={12} files={FILES7} gap={8} tgap={3} hscroll="287px" thumb="289px" />
            <ContextMenu $x={257} $y={128}>
              {CONTEXT.map((c, i) => {
                if (!c) return <hr key={i} />;
                const [t, k] = Array.isArray(c) ? c : [c];
                return <MenuItem key={i} $bold={k === "bold"} $hot={k === "hot"}>{t}{k === "sub" && <Caret size={5} dir="right" />}</MenuItem>;
              })}
            </ContextMenu>
            <Callout box={[319, 54, 101, 15]} tail="337,68 292,129 361,68">①右ﾎﾞﾀﾝをｸﾘｯｸする。</Callout>
            <Callout box={[370, 185, 139, 16]} tail="394,200 333,259 428,200">②『ｸｨｯｸ解凍(Q)』をｸﾘｯｸする。</Callout>
          </Figure>
        </Step>
        <Step $gap={13}>
          <StepNo>9</StepNo>
          <Figure $w={503}>
            <Explorer back h={174} pane={139} cols={[117, 63, 78]} row={13} size={7} files={FILES9} gap={6} tgap={2} thumb="18px" />
            <Callout box={[318, 31, 80, 15]} tail="331,45 266,93 351,45">解凍されたﾌｫﾙﾀﾞ</Callout>
          </Figure>
        </Step>
        <Step $gap={13}>
          <Heading>10 (1)Microsoft Excelを起動します。</Heading>
          <Heading $in>(2)「開く」ボタンをクリックし、ダウンロードしたファイルを選択し、もう一度「開く」ボタンをクリックします。</Heading>
          <StepNo />
          <Figure $w={441}>
            <OpenDialog />
            <Callout box={[264, 62, 146, 16]} tail="289,63 196,33 323,63">①解凍されたﾌｫﾙﾀﾞを指定する。</Callout>
            <Callout box={[265, 176, 89, 16]} tail="317,191 387,232 339,191">②開くをｸﾘｯｸする。</Callout>
          </Figure>
        </Step>
        <Step $gap={10}>
          <StepNo $wide>11</StepNo>
          <Figure $w={378}>
            <Wizard1 />
            <Cover $x={87} $y={176} $w={25} $h={38} />
            <Callout box={[266, 183, 110, 16]} tail="286,198 300,240 312,198">①『次へ＞』をｸﾘｯｸする。</Callout>
          </Figure>
        </Step>
        <Step $gap={14}>
          <StepNo $wide>12</StepNo>
          <Figure $w={378}>
            <Wizard2 />
            <Cover $x={145} $y={178} $w={24} $h={35} />
            <Callout box={[266, 42, 115, 16]} tail="267,50 179,65 267,54">①『ｶﾝﾏ(C)』をﾁｪｯｸする。</Callout>
            <Callout box={[266, 182, 110, 16]} tail="286,197 300,239 312,197">②『次へ＞』をｸﾘｯｸする。</Callout>
          </Figure>
        </Step>
        <Step $gap={14}>
          <StepNo $wide>13</StepNo>
          <Figure $w={378}>
            <Wizard3 />
            <Cover $x={145} $y={177} $w={25} $h={38} />
            <Callout box={[53, 76, 128, 16]} tail="129,77 234,59 159,77">①『文字列(T)』をﾁｪｯｸする。</Callout>
            <Callout box={[213, 194, 116, 16]} tail="280,209 343,245 309,209">①『完了(F)』をｸﾘｯｸする。</Callout>
          </Figure>
        </Step>
        <Step $gap={15}>
          <StepNo $wide>14</StepNo>
          <Figure $w={459}>
            <Excel />
            <Tip>ハイパーリンクの挿入</Tip>
            <Cover $x={104} $y={111} $w={65} $h={281} />
            <Callout box={[55, 7, 166, 15]}>こんな感じでEXCELに展開できます。</Callout>
          </Figure>
        </Step>
        <EndBox>THE END</EndBox>
      </Page>
    </>
  );
}
